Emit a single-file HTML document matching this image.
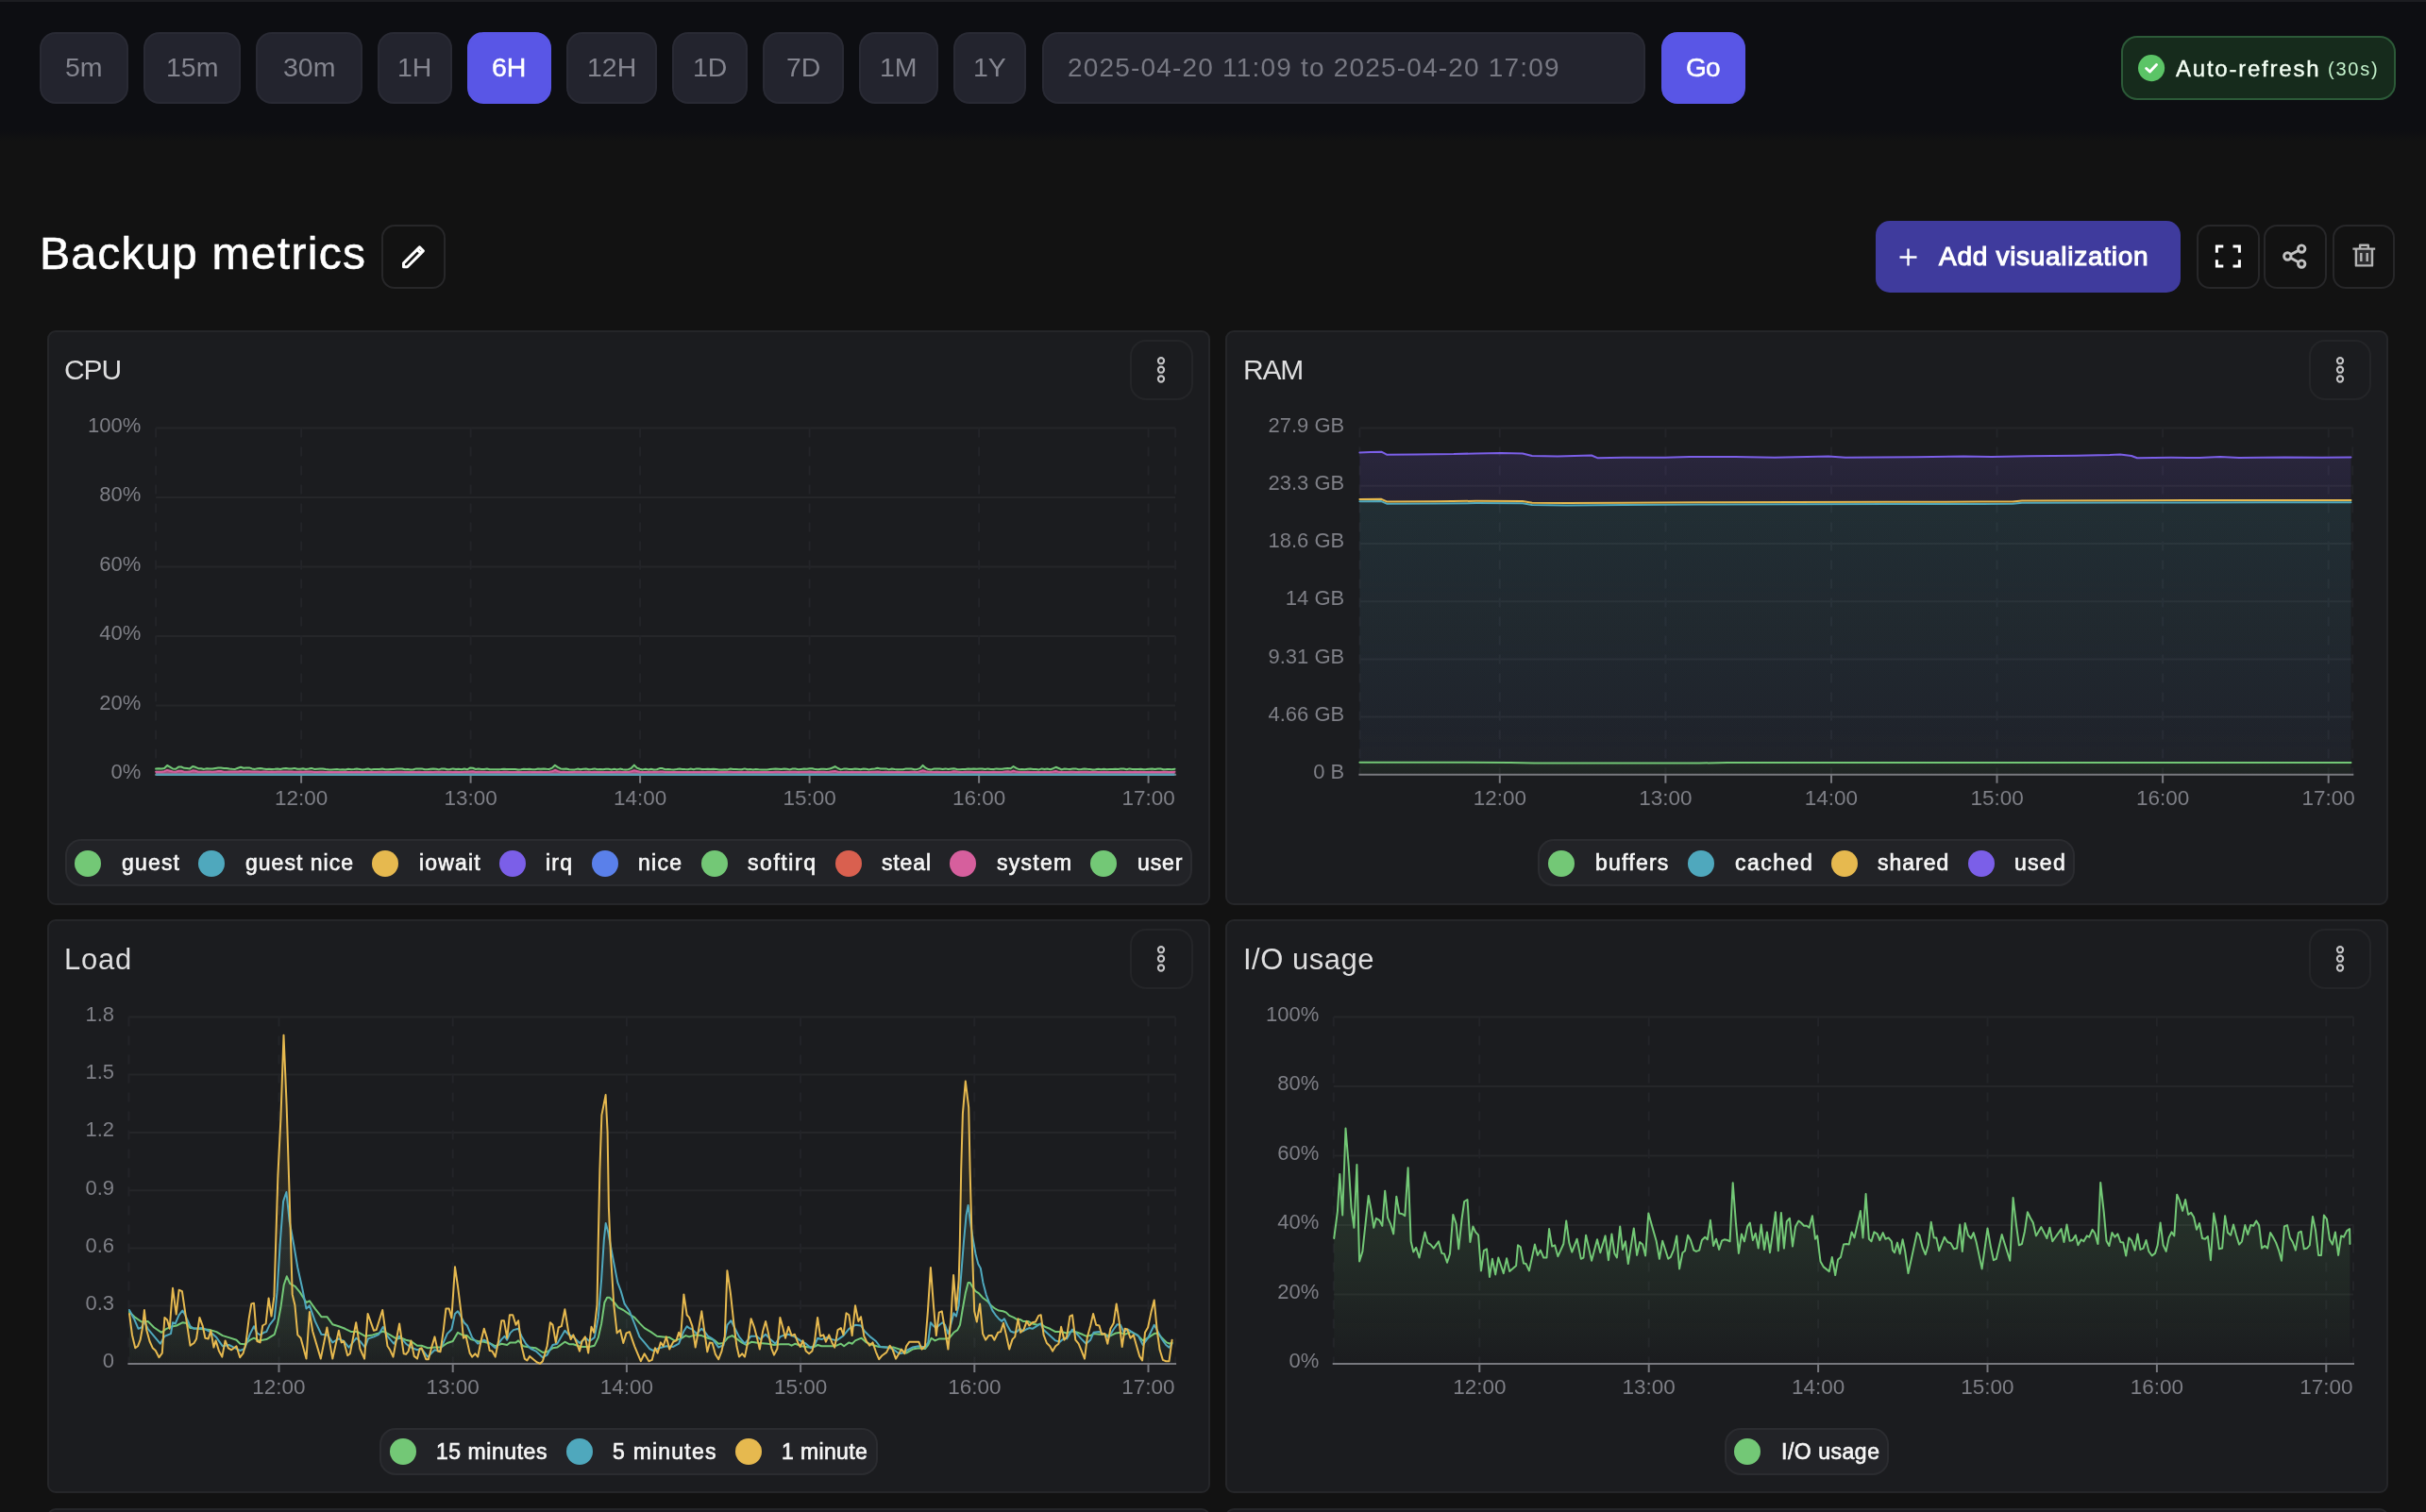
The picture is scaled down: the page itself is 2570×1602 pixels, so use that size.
<!DOCTYPE html>
<html lang="en"><head><meta charset="utf-8"><meta name="viewport" content="width=2570"><title>Backup metrics</title><style>
html,body{margin:0;padding:0;background:#121212;}
body{width:2570px;height:1602px;overflow:hidden;position:relative;font-family:'Liberation Sans', sans-serif;}
header,main,nav,section,div,button,ul,li,h1,h2{position:absolute;box-sizing:border-box;margin:0;padding:0;}
main,nav,li,.titlebar{left:0;top:0;width:0;height:0;}
button{font:inherit;color:inherit;background:none;border:none;text-align:left;overflow:visible;cursor:pointer;}
ul{list-style:none;}
h1,h2{font-weight:400;}
.t{position:absolute;white-space:pre;display:block;will-change:transform;}
.abs{position:absolute;}
.hdr{left:0;top:0;width:2570px;height:149px;border-top:2px solid #1c1d21;background:linear-gradient(#0d0e12 0,#0d0e12 136px,#121212 147px);}
.btn{background:#23242e;border:2px solid #292a34;border-radius:17px;}
.btn.act{background:#5956e6;border-color:#5956e6;}
.ar{background:#162b1c;border:2px solid #2c5a38;border-radius:17px;}
.ib{background:#121212;border:2px solid #272729;border-radius:14px;}
.addv{background:#3f3b9d;border-radius:15px;}
.panel{background:#1b1c1f;border:2px solid #252629;border-radius:9px;}
.kb{border:2px solid #242528;border-radius:17px;}
.lg{background:#222327;border:2px solid #2b2c30;border-radius:17px;}
.dot{position:absolute;width:28px;height:28px;border-radius:50%;display:block;}
svg{display:block;overflow:visible;}
.chart{position:absolute;will-change:transform;font-family:'Liberation Sans', sans-serif;}
</style></head><body><header class="hdr"><nav class="ranges" aria-label="Time range"><button type="button" class="btn" style="left:42px;top:32px;width:94px;height:75.7px;"><span class="t" style="left:25.2px;top:18.28px;font-size:28.5px;line-height:34px;color:#84858f;">5m</span></button><button type="button" class="btn" style="left:152px;top:32px;width:103px;height:75.7px;"><span class="t" style="left:21.77px;top:18.28px;font-size:28.5px;line-height:34px;color:#84858f;">15m</span></button><button type="button" class="btn" style="left:271px;top:32px;width:113px;height:75.7px;"><span class="t" style="left:26.77px;top:18.28px;font-size:28.5px;line-height:34px;color:#84858f;">30m</span></button><button type="button" class="btn" style="left:400px;top:32px;width:79px;height:75.7px;"><span class="t" style="left:19.28px;top:18.28px;font-size:28.5px;line-height:34px;color:#84858f;">1H</span></button><button type="button" class="btn act" style="left:495px;top:32px;width:89px;height:75.7px;"><span class="t" style="left:24.28px;top:18.28px;font-size:28.5px;line-height:34px;color:#ffffff;-webkit-text-stroke:0.45px #fff;">6H</span></button><button type="button" class="btn" style="left:600px;top:32px;width:96px;height:75.7px;"><span class="t" style="left:19.85px;top:18.28px;font-size:28.5px;line-height:34px;color:#84858f;">12H</span></button><button type="button" class="btn" style="left:712px;top:32px;width:79.5px;height:75.7px;"><span class="t" style="left:19.53px;top:18.28px;font-size:28.5px;line-height:34px;color:#84858f;">1D</span></button><button type="button" class="btn" style="left:808px;top:32px;width:85.5px;height:75.7px;"><span class="t" style="left:22.53px;top:18.28px;font-size:28.5px;line-height:34px;color:#84858f;">7D</span></button><button type="button" class="btn" style="left:910px;top:32px;width:84px;height:75.7px;"><span class="t" style="left:20.2px;top:18.28px;font-size:28.5px;line-height:34px;color:#84858f;">1M</span></button><button type="button" class="btn" style="left:1010px;top:32px;width:76.5px;height:75.7px;"><span class="t" style="left:18.81px;top:18.28px;font-size:28.5px;line-height:34px;color:#84858f;">1Y</span></button></nav><div class="btn field" style="left:1103.5px;top:32px;width:639px;height:75.7px;"><span class="t" style="left:25.2px;top:19.17px;font-size:28px;line-height:34px;color:#777882;letter-spacing:1.186px;">2025-04-20 11:09 to 2025-04-20 17:09</span></div><button type="button" class="btn act" style="left:1759.5px;top:32px;width:89.5px;height:75.7px;"><span class="t" style="left:24.5px;top:19.17px;font-size:28px;line-height:34px;color:#ffffff;letter-spacing:-0.859px;-webkit-text-stroke:0.5px #fff;">Go</span></button><div class="ar" style="left:2247.3px;top:36.1px;width:290.5px;height:67.6px;"><svg class="abs" style="left:15.4px;top:17.8px" width="28.2" height="28.2" viewBox="0 0 28 28"><circle cx="14" cy="14" r="14" fill="#5bc466"/><path d="M8.6 14.4L12.4 17.9L19.4 10.4" fill="none" stroke="#fff" stroke-width="2.9" stroke-linecap="round" stroke-linejoin="round"/></svg><span class="t" style="left:56.2px;top:17.68px;font-size:24px;line-height:29px;color:#f4fff4;letter-spacing:1.767px;-webkit-text-stroke:0.4px #f4fff4;">Auto-refresh</span><span class="t" style="left:216.7px;top:20.63px;font-size:20px;line-height:24px;color:#c4f2cc;letter-spacing:1.755px;">(30s)</span></div></header><main><div class="titlebar"><h1 class="t" style="left:41.5px;top:240.45px;font-size:48px;line-height:58px;color:#ffffff;letter-spacing:1.299px;-webkit-text-stroke:0.55px #fff;">Backup metrics</h1><button type="button" class="ib" aria-label="Edit" style="left:404px;top:238.4px;width:68px;height:67.3px;"><svg class="abs" style="left:19.8px;top:19.4px" width="24.3" height="24.3" viewBox="0 0 24 24"><path d="M1.5 22.5V18.6L18.2 1.9L22.1 5.8L5.4 22.5Z M15.8 4.3L19.7 8.2" fill="none" stroke="#fff" stroke-width="3" stroke-linejoin="round" stroke-linecap="round"/></svg></button><button type="button" class="addv" style="left:1987px;top:234px;width:323px;height:75.5px;"><svg class="abs" style="left:25px;top:28.5px" width="19" height="19" viewBox="0 0 19 19"><path d="M9.5 0.5V18.5M0.5 9.5H18.5" stroke="#fff" stroke-width="2.4" fill="none"/></svg><span class="t" style="left:67px;top:20.82px;font-size:28px;line-height:34px;color:#ffffff;letter-spacing:0.711px;-webkit-text-stroke:1.1px #fff;">Add visualization</span></button><button type="button" class="ib" aria-label="Fullscreen" style="left:2326.5px;top:238.4px;width:67.2px;height:67.3px;"><svg class="abs" style="left:0;top:0" width="63.2" height="63.3" viewBox="2328.5 240.4 63.2 63.3"><path d="M2347.9 268.2V261.3H2354.8M2365 261.3H2371.9V268.2M2371.9 275.6V282.5H2365M2354.8 282.5H2347.9V275.6" fill="none" stroke="#fff" stroke-width="3"/></svg></button><button type="button" class="ib" aria-label="Share" style="left:2398.4px;top:238.4px;width:66.8px;height:67.3px;"><svg class="abs" style="left:0;top:0" width="62.8" height="63.3" viewBox="2400.4 240.4 62.8 63.3"><g fill="none" stroke="#c2c2c2" stroke-width="2.9"><circle cx="2438.6" cy="264" r="3.7"/><circle cx="2438.6" cy="280" r="3.7"/><circle cx="2423.7" cy="271.9" r="3.7"/><path d="M2427 270.1L2435.3 265.8M2427 273.7L2435.3 278.2"/></g></svg></button><button type="button" class="ib" aria-label="Delete" style="left:2470.7px;top:238.4px;width:66.8px;height:67.3px;"><svg class="abs" style="left:0;top:0" width="62.8" height="63.3" viewBox="2472.7 240.4 62.8 63.3"><path d="M2495.6 265V281.8H2512.7V265Z" fill="#2c2c2e"/><path d="M2492.1 264H2515.9M2499.8 263.5V260.2H2508.5V263.5M2495.6 264.5V281.8H2512.7V264.5M2501 268.4V277.4M2507.4 268.4V277.4" fill="none" stroke="#b4b4b4" stroke-width="2.4" stroke-linejoin="round"/></svg></button></div><section class="panel" style="left:49.9px;top:349.8px;width:1232px;height:608.8px;"><h2 class="t" style="left:16.6px;top:22.65px;font-size:30px;line-height:36px;color:#dededf;letter-spacing:-1.072px;">CPU</h2><button type="button" class="kb" aria-label="Panel menu" style="left:1145.5px;top:8px;width:66.4px;height:64.3px;"><svg class="abs" style="left:25px;top:14.5px" width="12" height="32" viewBox="0 0 12 32"><g fill="none" stroke="#c4c4c6" stroke-width="2.1"><circle cx="6" cy="6.2" r="3.1"/><circle cx="6" cy="15.7" r="3.1"/><circle cx="6" cy="25.5" r="3.1"/></g></svg></button><svg class="chart" role="img" aria-label="CPU chart" style="left:0;top:0" width="1228" height="604.8" viewBox="51.9 351.8 1228 604.8"><defs></defs><path d="M165 453.4H1245M165 526.8H1245M165 600.3H1245M165 673.7H1245M165 747.2H1245" stroke="#252629" stroke-width="2" fill="none"/><path d="M165 453.4V820.6M319 453.4V820.6M498.5 453.4V820.6M678 453.4V820.6M857.5 453.4V820.6M1037 453.4V820.6M1216.5 453.4V820.6M1245 453.4V820.6" stroke="#232428" stroke-width="2" stroke-dasharray="10 10" fill="none"/><path d="M164 820.6H1246M319 820.6v9M498.5 820.6v9M678 820.6v9M857.5 820.6v9M1037 820.6v9M1216.5 820.6v9" stroke="#77787e" stroke-width="2" fill="none"/><path d="M165 814.4L168 814L171 814.2L174 813.8L177 810.8L180 812.4L183 814.3L186 814.6L189 812.4L192 812.3L195 813.6L198 813.8L201 814.2L204 811.8L207 812.6L210 814L213 814.1L216 814.7L219 814L222 814.4L225 814.3L228 813.7L231 813.4L234 813.4L237 813.9L240 813.7L243 814.3L246 814.6L249 814.7L252 813.5L255 812.6L257.9 813.6L260.9 813.3L263.9 813.2L266.9 814.2L269.9 814.7L272.9 814L275.9 813.8L278.9 814.3L281.9 814.7L284.9 814.6L287.9 814.7L290.9 814.6L293.9 814.3L296.9 814.7L299.9 814.1L302.9 813.8L305.9 814.4L308.9 814.4L311.9 813.7L314.9 814.6L317.9 814.5L320.9 814.1L323.9 814.7L326.9 814.3L329.9 813.7L332.9 814.7L335.9 814.5L338.9 814.3L341.9 814.3L344.9 814.8L347.9 815.1L350.9 815.2L353.9 815L356.9 814.9L359.9 815.2L362.9 815.1L365.9 815.2L368.9 814.6L371.9 815L374.9 814.8L377.9 814.3L380.9 814.7L383.9 815.2L386.9 814.9L389.9 814.3L392.9 815.2L395.9 814.7L398.9 814.7L401.9 814.7L404.9 814.3L407.9 815L410.9 815.1L413.9 814.7L416.9 814.9L419.9 814.4L422.9 814.3L425.9 814.3L428.9 815L431.9 814.9L434.9 815.2L437.8 815L440.8 814.2L443.8 814.2L446.8 814.2L449.8 815L452.8 815L455.8 814.6L458.8 814.3L461.8 814.5L464.8 815.2L467.8 814.2L470.8 814.4L473.8 815.1L476.8 814.9L479.8 814.2L482.8 814.8L485.8 814.5L488.8 815.1L491.8 814.3L494.8 815.1L497.8 813.4L500.8 813.6L503.8 814.8L506.8 814.2L509.8 814.7L512.8 814.8L515.8 814.3L518.8 815L521.8 815L524.8 815L527.8 815.1L530.8 814.9L533.8 814.6L536.8 814.8L539.8 814.7L542.8 814.7L545.8 814.8L548.8 815.2L551.8 815.1L554.8 814.5L557.8 814.9L560.8 814.6L563.8 815.1L566.8 815L569.8 814.4L572.8 814.6L575.8 814.2L578.8 814.6L581.8 814.7L584.8 813.4L587.8 810.5L590.8 812.7L593.8 814.2L596.8 814.6L599.8 814.3L602.8 815.1L605.8 815.2L608.8 815.2L611.8 814.4L614.8 815.1L617.7 814.5L620.7 814.3L623.7 815L626.7 814.8L629.7 814.2L632.7 815.1L635.7 814.7L638.7 815L641.7 814.5L644.7 814.6L647.7 815.2L650.7 814.6L653.7 815.2L656.7 814.4L659.7 815.1L662.7 815.2L665.7 815L668.7 813.6L671.7 810.4L674.7 813.4L677.7 814.6L680.7 815.2L683.7 814.5L686.7 815.2L689.7 814.6L692.7 815.2L695.7 815.1L698.7 813.9L701.7 813.9L704.7 815L707.7 814.7L710.7 815.1L713.7 815.2L716.7 814.9L719.7 814.4L722.7 814.7L725.7 814.9L728.7 815L731.7 814.4L734.7 815L737.7 814.2L740.7 814.3L743.7 814.7L746.7 814.8L749.7 814.5L752.7 814.9L755.7 814.5L758.7 814.8L761.7 815.2L764.7 815.2L767.7 815L770.7 815.2L773.7 814.3L776.7 814.9L779.7 814.9L782.7 815.1L785.7 815L788.7 814.2L791.7 815L794.7 814.9L797.6 815.2L800.6 814.7L803.6 815L806.6 815.2L809.6 815.2L812.6 815.2L815.6 814.9L818.6 814.6L821.6 814.4L824.6 814.5L827.6 814.8L830.6 814.2L833.6 814.5L836.6 815.2L839.6 814.3L842.6 814.4L845.6 815.1L848.6 814.7L851.6 814.4L854.6 814.6L857.6 814L860.6 814.1L863.6 814.9L866.6 815.1L869.6 814.6L872.6 814.6L875.6 814.7L878.6 814.4L881.6 813.3L884.6 811.9L887.6 813.8L890.6 815.2L893.6 814.4L896.6 814.4L899.6 814.7L902.6 814.7L905.6 814.4L908.6 814.5L911.6 815.1L914.6 814.4L917.6 814.6L920.6 815.2L923.6 814.5L926.6 814.2L929.6 813.6L932.6 814.2L935.6 814.3L938.6 814.2L941.6 815.2L944.6 814.3L947.6 814.8L950.6 815L953.6 815L956.6 815.1L959.6 814.2L962.6 814.3L965.6 814.3L968.6 815L971.6 814.7L974.5 813.9L977.5 810.7L980.5 813.5L983.5 814.9L986.5 815.2L989.5 814.3L992.5 814.2L995.5 814.3L998.5 814.8L1001.5 814.2L1004.5 814.9L1007.5 814.4L1010.5 814.1L1013.5 814.7L1016.5 815L1019.5 814.7L1022.5 814.8L1025.5 814.3L1028.5 814.6L1031.5 814.2L1034.5 814.5L1037.5 814.4L1040.5 814.4L1043.5 814.9L1046.5 814.2L1049.5 814.7L1052.5 814.9L1055.5 814.2L1058.5 814.5L1061.5 814.6L1064.5 814L1067.5 813.9L1070.5 814L1073.5 811.8L1076.5 813.7L1079.5 815L1082.5 814.9L1085.5 815L1088.5 814.6L1091.5 814.4L1094.5 814.8L1097.5 814.8L1100.5 815.2L1103.5 814.2L1106.5 814.7L1109.5 814.3L1112.5 815L1115.5 814L1118.5 812.6L1121.5 813.8L1124.5 815.2L1127.5 814.3L1130.5 814.6L1133.5 814.8L1136.5 814.3L1139.5 814.2L1142.5 815.1L1145.5 814.7L1148.5 814.2L1151.5 814.5L1154.5 814.7L1157.4 815.2L1160.4 815L1163.4 814.5L1166.4 815.1L1169.4 814.6L1172.4 815.1L1175.4 814.7L1178.4 814.8L1181.4 814.6L1184.4 814.9L1187.4 814.2L1190.4 814.3L1193.4 815L1196.4 814.2L1199.4 814.9L1202.4 814.7L1205.4 814.8L1208.4 814.5L1211.4 815L1214.4 814.9L1217.4 814.5L1220.4 814.4L1223.4 814.7L1226.4 814.2L1229.4 814.3L1232.4 815L1235.4 814.9L1238.4 814.7L1241.4 815L1244.4 814.5L1244.4 820.6L165 820.6Z" fill="rgba(115,200,118,0.14)" stroke="none"/><path d="M165 817.5L168 817.6L171 817.5L174 817L177 815.7L180 816.5L183 817.3L186 817.5L189 816.5L192 816.6L195 817.5L198 817.5L201 817.4L204 816.1L207 816.5L210 817.5L213 817.6L216 817.5L219 817.4L222 817.4L225 817.5L228 817.2L231 816.9L234 816.9L237 817.5L240 817.6L243 817.3L246 817.4L249 817.3L252 817.2L255 816.9L257.9 817.2L260.9 817.1L263.9 817L266.9 817.3L269.9 817.3L272.9 817.2L275.9 817.5L278.9 817.3L281.9 817.4L284.9 817.6L287.9 817.3L290.9 817.5L293.9 817.3L296.9 817.4L299.9 817.2L302.9 817.3L305.9 817.4L308.9 817.2L311.9 817.5L314.9 817.5L317.9 817.4L320.9 817.5L323.9 817.4L326.9 817.4L329.9 817.3L332.9 817.7L335.9 817.9L338.9 817.6L341.9 817.6L344.9 817.7L347.9 817.6L350.9 817.9L353.9 817.8L356.9 817.9L359.9 817.8L362.9 817.8L365.9 817.6L368.9 817.8L371.9 817.8L374.9 817.9L377.9 817.5L380.9 817.7L383.9 817.9L386.9 817.8L389.9 817.8L392.9 817.5L395.9 817.8L398.9 817.9L401.9 817.5L404.9 817.6L407.9 817.8L410.9 817.6L413.9 817.6L416.9 817.8L419.9 817.5L422.9 817.6L425.9 817.6L428.9 817.7L431.9 817.9L434.9 817.8L437.8 817.6L440.8 817.7L443.8 817.5L446.8 817.8L449.8 817.8L452.8 817.8L455.8 817.5L458.8 817.7L461.8 817.6L464.8 817.6L467.8 817.6L470.8 817.7L473.8 817.6L476.8 817.6L479.8 817.7L482.8 817.5L485.8 817.8L488.8 817.8L491.8 817.6L494.8 817.6L497.8 817.3L500.8 817.1L503.8 817.8L506.8 817.6L509.8 817.5L512.8 817.6L515.8 817.8L518.8 817.8L521.8 817.7L524.8 817.7L527.8 817.5L530.8 817.7L533.8 817.5L536.8 817.5L539.8 817.7L542.8 817.9L545.8 817.8L548.8 817.6L551.8 817.7L554.8 817.7L557.8 817.7L560.8 817.6L563.8 817.7L566.8 817.8L569.8 817.7L572.8 817.6L575.8 817.7L578.8 817.7L581.8 817.6L584.8 817.1L587.8 815.6L590.8 816.8L593.8 817.8L596.8 817.5L599.8 817.8L602.8 817.7L605.8 817.8L608.8 817.6L611.8 817.5L614.8 817.6L617.7 817.8L620.7 817.5L623.7 817.5L626.7 817.7L629.7 817.6L632.7 817.7L635.7 817.8L638.7 817.8L641.7 817.9L644.7 817.7L647.7 817.8L650.7 817.7L653.7 817.5L656.7 817.5L659.7 817.8L662.7 817.6L665.7 817.8L668.7 817L671.7 816L674.7 816.8L677.7 817.6L680.7 817.9L683.7 817.7L686.7 817.5L689.7 817.6L692.7 817.6L695.7 817.5L698.7 817.4L701.7 817.2L704.7 817.8L707.7 817.8L710.7 817.8L713.7 817.8L716.7 817.8L719.7 817.8L722.7 817.8L725.7 817.9L728.7 817.9L731.7 817.7L734.7 817.7L737.7 817.9L740.7 817.7L743.7 817.6L746.7 817.7L749.7 817.5L752.7 817.6L755.7 817.6L758.7 817.8L761.7 817.8L764.7 817.6L767.7 817.8L770.7 817.6L773.7 817.6L776.7 817.8L779.7 817.7L782.7 817.7L785.7 817.5L788.7 817.7L791.7 817.5L794.7 817.8L797.6 817.7L800.6 817.7L803.6 817.7L806.6 817.8L809.6 817.7L812.6 817.9L815.6 817.8L818.6 817.7L821.6 817.6L824.6 817.5L827.6 817.8L830.6 817.8L833.6 817.6L836.6 817.6L839.6 817.6L842.6 817.6L845.6 817.7L848.6 817.6L851.6 817.6L854.6 817.5L857.6 817.4L860.6 817.5L863.6 817.7L866.6 817.6L869.6 817.6L872.6 817.6L875.6 817.9L878.6 817.6L881.6 817L884.6 816.7L887.6 817.5L890.6 817.8L893.6 817.8L896.6 817.5L899.6 817.7L902.6 817.6L905.6 817.7L908.6 817.9L911.6 817.8L914.6 817.8L917.6 817.9L920.6 817.8L923.6 817.6L926.6 817.6L929.6 817.2L932.6 817.6L935.6 817.8L938.6 817.5L941.6 817.7L944.6 817.5L947.6 817.8L950.6 817.5L953.6 817.7L956.6 817.7L959.6 817.8L962.6 817.7L965.6 817.6L968.6 817.5L971.6 817.9L974.5 817.1L977.5 816L980.5 817L983.5 817.6L986.5 817.6L989.5 817.9L992.5 817.6L995.5 817.8L998.5 817.7L1001.5 817.7L1004.5 817.7L1007.5 817.6L1010.5 817.1L1013.5 817.4L1016.5 817.8L1019.5 817.8L1022.5 817.5L1025.5 817.6L1028.5 817.5L1031.5 817.7L1034.5 817.9L1037.5 817.7L1040.5 817.6L1043.5 817.9L1046.5 817.8L1049.5 817.8L1052.5 817.6L1055.5 817.8L1058.5 817.8L1061.5 817.7L1064.5 817.4L1067.5 817.1L1070.5 817.5L1073.5 816.4L1076.5 817.4L1079.5 817.9L1082.5 817.9L1085.5 817.8L1088.5 817.5L1091.5 817.7L1094.5 817.7L1097.5 817.8L1100.5 817.8L1103.5 817.8L1106.5 817.6L1109.5 817.8L1112.5 817.8L1115.5 817.4L1118.5 816.8L1121.5 817.7L1124.5 817.6L1127.5 817.7L1130.5 817.9L1133.5 817.5L1136.5 817.6L1139.5 817.8L1142.5 817.8L1145.5 817.6L1148.5 817.6L1151.5 817.6L1154.5 817.7L1157.4 817.6L1160.4 817.5L1163.4 817.8L1166.4 817.8L1169.4 817.6L1172.4 817.9L1175.4 817.7L1178.4 817.8L1181.4 817.9L1184.4 817.7L1187.4 817.6L1190.4 817.7L1193.4 817.8L1196.4 817.6L1199.4 817.9L1202.4 817.6L1205.4 817.8L1208.4 817.5L1211.4 817.9L1214.4 817.7L1217.4 817.8L1220.4 817.6L1223.4 817.8L1226.4 817.8L1229.4 817.8L1232.4 817.6L1235.4 817.5L1238.4 817.8L1241.4 817.7L1244.4 817.5L1244.4 820.6L165 820.6Z" fill="rgba(214,95,157,0.75)" stroke="none"/><path d="M165 817.5L168 817.6L171 817.5L174 817L177 815.7L180 816.5L183 817.3L186 817.5L189 816.5L192 816.6L195 817.5L198 817.5L201 817.4L204 816.1L207 816.5L210 817.5L213 817.6L216 817.5L219 817.4L222 817.4L225 817.5L228 817.2L231 816.9L234 816.9L237 817.5L240 817.6L243 817.3L246 817.4L249 817.3L252 817.2L255 816.9L257.9 817.2L260.9 817.1L263.9 817L266.9 817.3L269.9 817.3L272.9 817.2L275.9 817.5L278.9 817.3L281.9 817.4L284.9 817.6L287.9 817.3L290.9 817.5L293.9 817.3L296.9 817.4L299.9 817.2L302.9 817.3L305.9 817.4L308.9 817.2L311.9 817.5L314.9 817.5L317.9 817.4L320.9 817.5L323.9 817.4L326.9 817.4L329.9 817.3L332.9 817.7L335.9 817.9L338.9 817.6L341.9 817.6L344.9 817.7L347.9 817.6L350.9 817.9L353.9 817.8L356.9 817.9L359.9 817.8L362.9 817.8L365.9 817.6L368.9 817.8L371.9 817.8L374.9 817.9L377.9 817.5L380.9 817.7L383.9 817.9L386.9 817.8L389.9 817.8L392.9 817.5L395.9 817.8L398.9 817.9L401.9 817.5L404.9 817.6L407.9 817.8L410.9 817.6L413.9 817.6L416.9 817.8L419.9 817.5L422.9 817.6L425.9 817.6L428.9 817.7L431.9 817.9L434.9 817.8L437.8 817.6L440.8 817.7L443.8 817.5L446.8 817.8L449.8 817.8L452.8 817.8L455.8 817.5L458.8 817.7L461.8 817.6L464.8 817.6L467.8 817.6L470.8 817.7L473.8 817.6L476.8 817.6L479.8 817.7L482.8 817.5L485.8 817.8L488.8 817.8L491.8 817.6L494.8 817.6L497.8 817.3L500.8 817.1L503.8 817.8L506.8 817.6L509.8 817.5L512.8 817.6L515.8 817.8L518.8 817.8L521.8 817.7L524.8 817.7L527.8 817.5L530.8 817.7L533.8 817.5L536.8 817.5L539.8 817.7L542.8 817.9L545.8 817.8L548.8 817.6L551.8 817.7L554.8 817.7L557.8 817.7L560.8 817.6L563.8 817.7L566.8 817.8L569.8 817.7L572.8 817.6L575.8 817.7L578.8 817.7L581.8 817.6L584.8 817.1L587.8 815.6L590.8 816.8L593.8 817.8L596.8 817.5L599.8 817.8L602.8 817.7L605.8 817.8L608.8 817.6L611.8 817.5L614.8 817.6L617.7 817.8L620.7 817.5L623.7 817.5L626.7 817.7L629.7 817.6L632.7 817.7L635.7 817.8L638.7 817.8L641.7 817.9L644.7 817.7L647.7 817.8L650.7 817.7L653.7 817.5L656.7 817.5L659.7 817.8L662.7 817.6L665.7 817.8L668.7 817L671.7 816L674.7 816.8L677.7 817.6L680.7 817.9L683.7 817.7L686.7 817.5L689.7 817.6L692.7 817.6L695.7 817.5L698.7 817.4L701.7 817.2L704.7 817.8L707.7 817.8L710.7 817.8L713.7 817.8L716.7 817.8L719.7 817.8L722.7 817.8L725.7 817.9L728.7 817.9L731.7 817.7L734.7 817.7L737.7 817.9L740.7 817.7L743.7 817.6L746.7 817.7L749.7 817.5L752.7 817.6L755.7 817.6L758.7 817.8L761.7 817.8L764.7 817.6L767.7 817.8L770.7 817.6L773.7 817.6L776.7 817.8L779.7 817.7L782.7 817.7L785.7 817.5L788.7 817.7L791.7 817.5L794.7 817.8L797.6 817.7L800.6 817.7L803.6 817.7L806.6 817.8L809.6 817.7L812.6 817.9L815.6 817.8L818.6 817.7L821.6 817.6L824.6 817.5L827.6 817.8L830.6 817.8L833.6 817.6L836.6 817.6L839.6 817.6L842.6 817.6L845.6 817.7L848.6 817.6L851.6 817.6L854.6 817.5L857.6 817.4L860.6 817.5L863.6 817.7L866.6 817.6L869.6 817.6L872.6 817.6L875.6 817.9L878.6 817.6L881.6 817L884.6 816.7L887.6 817.5L890.6 817.8L893.6 817.8L896.6 817.5L899.6 817.7L902.6 817.6L905.6 817.7L908.6 817.9L911.6 817.8L914.6 817.8L917.6 817.9L920.6 817.8L923.6 817.6L926.6 817.6L929.6 817.2L932.6 817.6L935.6 817.8L938.6 817.5L941.6 817.7L944.6 817.5L947.6 817.8L950.6 817.5L953.6 817.7L956.6 817.7L959.6 817.8L962.6 817.7L965.6 817.6L968.6 817.5L971.6 817.9L974.5 817.1L977.5 816L980.5 817L983.5 817.6L986.5 817.6L989.5 817.9L992.5 817.6L995.5 817.8L998.5 817.7L1001.5 817.7L1004.5 817.7L1007.5 817.6L1010.5 817.1L1013.5 817.4L1016.5 817.8L1019.5 817.8L1022.5 817.5L1025.5 817.6L1028.5 817.5L1031.5 817.7L1034.5 817.9L1037.5 817.7L1040.5 817.6L1043.5 817.9L1046.5 817.8L1049.5 817.8L1052.5 817.6L1055.5 817.8L1058.5 817.8L1061.5 817.7L1064.5 817.4L1067.5 817.1L1070.5 817.5L1073.5 816.4L1076.5 817.4L1079.5 817.9L1082.5 817.9L1085.5 817.8L1088.5 817.5L1091.5 817.7L1094.5 817.7L1097.5 817.8L1100.5 817.8L1103.5 817.8L1106.5 817.6L1109.5 817.8L1112.5 817.8L1115.5 817.4L1118.5 816.8L1121.5 817.7L1124.5 817.6L1127.5 817.7L1130.5 817.9L1133.5 817.5L1136.5 817.6L1139.5 817.8L1142.5 817.8L1145.5 817.6L1148.5 817.6L1151.5 817.6L1154.5 817.7L1157.4 817.6L1160.4 817.5L1163.4 817.8L1166.4 817.8L1169.4 817.6L1172.4 817.9L1175.4 817.7L1178.4 817.8L1181.4 817.9L1184.4 817.7L1187.4 817.6L1190.4 817.7L1193.4 817.8L1196.4 817.6L1199.4 817.9L1202.4 817.6L1205.4 817.8L1208.4 817.5L1211.4 817.9L1214.4 817.7L1217.4 817.8L1220.4 817.6L1223.4 817.8L1226.4 817.8L1229.4 817.8L1232.4 817.6L1235.4 817.5L1238.4 817.8L1241.4 817.7L1244.4 817.5" fill="none" stroke="#d65f9d" stroke-width="2" stroke-linejoin="round" stroke-linecap="round"/><path d="M165 814.4L168 814L171 814.2L174 813.8L177 810.8L180 812.4L183 814.3L186 814.6L189 812.4L192 812.3L195 813.6L198 813.8L201 814.2L204 811.8L207 812.6L210 814L213 814.1L216 814.7L219 814L222 814.4L225 814.3L228 813.7L231 813.4L234 813.4L237 813.9L240 813.7L243 814.3L246 814.6L249 814.7L252 813.5L255 812.6L257.9 813.6L260.9 813.3L263.9 813.2L266.9 814.2L269.9 814.7L272.9 814L275.9 813.8L278.9 814.3L281.9 814.7L284.9 814.6L287.9 814.7L290.9 814.6L293.9 814.3L296.9 814.7L299.9 814.1L302.9 813.8L305.9 814.4L308.9 814.4L311.9 813.7L314.9 814.6L317.9 814.5L320.9 814.1L323.9 814.7L326.9 814.3L329.9 813.7L332.9 814.7L335.9 814.5L338.9 814.3L341.9 814.3L344.9 814.8L347.9 815.1L350.9 815.2L353.9 815L356.9 814.9L359.9 815.2L362.9 815.1L365.9 815.2L368.9 814.6L371.9 815L374.9 814.8L377.9 814.3L380.9 814.7L383.9 815.2L386.9 814.9L389.9 814.3L392.9 815.2L395.9 814.7L398.9 814.7L401.9 814.7L404.9 814.3L407.9 815L410.9 815.1L413.9 814.7L416.9 814.9L419.9 814.4L422.9 814.3L425.9 814.3L428.9 815L431.9 814.9L434.9 815.2L437.8 815L440.8 814.2L443.8 814.2L446.8 814.2L449.8 815L452.8 815L455.8 814.6L458.8 814.3L461.8 814.5L464.8 815.2L467.8 814.2L470.8 814.4L473.8 815.1L476.8 814.9L479.8 814.2L482.8 814.8L485.8 814.5L488.8 815.1L491.8 814.3L494.8 815.1L497.8 813.4L500.8 813.6L503.8 814.8L506.8 814.2L509.8 814.7L512.8 814.8L515.8 814.3L518.8 815L521.8 815L524.8 815L527.8 815.1L530.8 814.9L533.8 814.6L536.8 814.8L539.8 814.7L542.8 814.7L545.8 814.8L548.8 815.2L551.8 815.1L554.8 814.5L557.8 814.9L560.8 814.6L563.8 815.1L566.8 815L569.8 814.4L572.8 814.6L575.8 814.2L578.8 814.6L581.8 814.7L584.8 813.4L587.8 810.5L590.8 812.7L593.8 814.2L596.8 814.6L599.8 814.3L602.8 815.1L605.8 815.2L608.8 815.2L611.8 814.4L614.8 815.1L617.7 814.5L620.7 814.3L623.7 815L626.7 814.8L629.7 814.2L632.7 815.1L635.7 814.7L638.7 815L641.7 814.5L644.7 814.6L647.7 815.2L650.7 814.6L653.7 815.2L656.7 814.4L659.7 815.1L662.7 815.2L665.7 815L668.7 813.6L671.7 810.4L674.7 813.4L677.7 814.6L680.7 815.2L683.7 814.5L686.7 815.2L689.7 814.6L692.7 815.2L695.7 815.1L698.7 813.9L701.7 813.9L704.7 815L707.7 814.7L710.7 815.1L713.7 815.2L716.7 814.9L719.7 814.4L722.7 814.7L725.7 814.9L728.7 815L731.7 814.4L734.7 815L737.7 814.2L740.7 814.3L743.7 814.7L746.7 814.8L749.7 814.5L752.7 814.9L755.7 814.5L758.7 814.8L761.7 815.2L764.7 815.2L767.7 815L770.7 815.2L773.7 814.3L776.7 814.9L779.7 814.9L782.7 815.1L785.7 815L788.7 814.2L791.7 815L794.7 814.9L797.6 815.2L800.6 814.7L803.6 815L806.6 815.2L809.6 815.2L812.6 815.2L815.6 814.9L818.6 814.6L821.6 814.4L824.6 814.5L827.6 814.8L830.6 814.2L833.6 814.5L836.6 815.2L839.6 814.3L842.6 814.4L845.6 815.1L848.6 814.7L851.6 814.4L854.6 814.6L857.6 814L860.6 814.1L863.6 814.9L866.6 815.1L869.6 814.6L872.6 814.6L875.6 814.7L878.6 814.4L881.6 813.3L884.6 811.9L887.6 813.8L890.6 815.2L893.6 814.4L896.6 814.4L899.6 814.7L902.6 814.7L905.6 814.4L908.6 814.5L911.6 815.1L914.6 814.4L917.6 814.6L920.6 815.2L923.6 814.5L926.6 814.2L929.6 813.6L932.6 814.2L935.6 814.3L938.6 814.2L941.6 815.2L944.6 814.3L947.6 814.8L950.6 815L953.6 815L956.6 815.1L959.6 814.2L962.6 814.3L965.6 814.3L968.6 815L971.6 814.7L974.5 813.9L977.5 810.7L980.5 813.5L983.5 814.9L986.5 815.2L989.5 814.3L992.5 814.2L995.5 814.3L998.5 814.8L1001.5 814.2L1004.5 814.9L1007.5 814.4L1010.5 814.1L1013.5 814.7L1016.5 815L1019.5 814.7L1022.5 814.8L1025.5 814.3L1028.5 814.6L1031.5 814.2L1034.5 814.5L1037.5 814.4L1040.5 814.4L1043.5 814.9L1046.5 814.2L1049.5 814.7L1052.5 814.9L1055.5 814.2L1058.5 814.5L1061.5 814.6L1064.5 814L1067.5 813.9L1070.5 814L1073.5 811.8L1076.5 813.7L1079.5 815L1082.5 814.9L1085.5 815L1088.5 814.6L1091.5 814.4L1094.5 814.8L1097.5 814.8L1100.5 815.2L1103.5 814.2L1106.5 814.7L1109.5 814.3L1112.5 815L1115.5 814L1118.5 812.6L1121.5 813.8L1124.5 815.2L1127.5 814.3L1130.5 814.6L1133.5 814.8L1136.5 814.3L1139.5 814.2L1142.5 815.1L1145.5 814.7L1148.5 814.2L1151.5 814.5L1154.5 814.7L1157.4 815.2L1160.4 815L1163.4 814.5L1166.4 815.1L1169.4 814.6L1172.4 815.1L1175.4 814.7L1178.4 814.8L1181.4 814.6L1184.4 814.9L1187.4 814.2L1190.4 814.3L1193.4 815L1196.4 814.2L1199.4 814.9L1202.4 814.7L1205.4 814.8L1208.4 814.5L1211.4 815L1214.4 814.9L1217.4 814.5L1220.4 814.4L1223.4 814.7L1226.4 814.2L1229.4 814.3L1232.4 815L1235.4 814.9L1238.4 814.7L1241.4 815L1244.4 814.5" fill="none" stroke="#73c876" stroke-width="2" stroke-linejoin="round" stroke-linecap="round"/><path d="M165 820.6H1244.4" stroke="#5b9fb2" stroke-width="2.4" fill="none"/><g class="axl"><text x="149.2" y="457.38" font-size="22" fill="#7e7f86" text-anchor="end">100%</text><text x="149.2" y="530.88" font-size="22" fill="#7e7f86" text-anchor="end">80%</text><text x="149.2" y="604.38" font-size="22" fill="#7e7f86" text-anchor="end">60%</text><text x="149.2" y="677.88" font-size="22" fill="#7e7f86" text-anchor="end">40%</text><text x="149.2" y="751.38" font-size="22" fill="#7e7f86" text-anchor="end">20%</text><text x="149.2" y="824.88" font-size="22" fill="#7e7f86" text-anchor="end">0%</text><text x="319" y="852.85" font-size="22.5" fill="#7e7f86" text-anchor="middle">12:00</text><text x="498.5" y="852.85" font-size="22.5" fill="#7e7f86" text-anchor="middle">13:00</text><text x="678" y="852.85" font-size="22.5" fill="#7e7f86" text-anchor="middle">14:00</text><text x="857.5" y="852.85" font-size="22.5" fill="#7e7f86" text-anchor="middle">15:00</text><text x="1037" y="852.85" font-size="22.5" fill="#7e7f86" text-anchor="middle">16:00</text><text x="1216.5" y="852.85" font-size="22.5" fill="#7e7f86" text-anchor="middle">17:00</text></g></svg><ul class="lg" style="left:17.1px;top:537.6px;width:1194px;height:50.1px;"><li><i class="dot" style="left:8.3px;top:9.25px;background:#73c876"></i><span class="t" style="left:58px;top:8.71px;font-size:23px;line-height:28px;color:#f6f6f6;letter-spacing:1.184px;-webkit-text-stroke:0.65px #f6f6f6;">guest</span></li><li><i class="dot" style="left:139px;top:9.25px;background:#4fa8bd"></i><span class="t" style="left:188.8px;top:8.71px;font-size:23px;line-height:28px;color:#f6f6f6;letter-spacing:1.016px;-webkit-text-stroke:0.65px #f6f6f6;">guest nice</span></li><li><i class="dot" style="left:322.8px;top:9.25px;background:#e6b94f"></i><span class="t" style="left:372.7px;top:8.71px;font-size:23px;line-height:28px;color:#f6f6f6;letter-spacing:1.157px;-webkit-text-stroke:0.65px #f6f6f6;">iowait</span></li><li><i class="dot" style="left:457.6px;top:9.25px;background:#7b5fe8"></i><span class="t" style="left:507px;top:8.71px;font-size:23px;line-height:28px;color:#f6f6f6;letter-spacing:1.219px;-webkit-text-stroke:0.65px #f6f6f6;">irq</span></li><li><i class="dot" style="left:555.8px;top:9.25px;background:#5a80ea"></i><span class="t" style="left:605.4px;top:8.71px;font-size:23px;line-height:28px;color:#f6f6f6;letter-spacing:1.299px;-webkit-text-stroke:0.65px #f6f6f6;">nice</span></li><li><i class="dot" style="left:671.8px;top:9.25px;background:#73c876"></i><span class="t" style="left:721.5px;top:8.71px;font-size:23px;line-height:28px;color:#f6f6f6;letter-spacing:1.560px;-webkit-text-stroke:0.65px #f6f6f6;">softirq</span></li><li><i class="dot" style="left:813.8px;top:9.25px;background:#d9604f"></i><span class="t" style="left:863.4px;top:8.71px;font-size:23px;line-height:28px;color:#f6f6f6;letter-spacing:0.852px;-webkit-text-stroke:0.65px #f6f6f6;">steal</span></li><li><i class="dot" style="left:935.4px;top:9.25px;background:#d65f9d"></i><span class="t" style="left:984.8px;top:8.71px;font-size:23px;line-height:28px;color:#f6f6f6;letter-spacing:1.271px;-webkit-text-stroke:0.65px #f6f6f6;">system</span></li><li><i class="dot" style="left:1084.2px;top:9.25px;background:#73c876"></i><span class="t" style="left:1133.9px;top:8.71px;font-size:23px;line-height:28px;color:#f6f6f6;letter-spacing:0.883px;-webkit-text-stroke:0.65px #f6f6f6;">user</span></li></ul></section><section class="panel" style="left:1298px;top:349.8px;width:1232px;height:608.8px;"><h2 class="t" style="left:16.6px;top:22.65px;font-size:30px;line-height:36px;color:#dededf;letter-spacing:-1.186px;">RAM</h2><button type="button" class="kb" aria-label="Panel menu" style="left:1145.5px;top:8px;width:66.4px;height:64.3px;"><svg class="abs" style="left:25px;top:14.5px" width="12" height="32" viewBox="0 0 12 32"><g fill="none" stroke="#c4c4c6" stroke-width="2.1"><circle cx="6" cy="6.2" r="3.1"/><circle cx="6" cy="15.7" r="3.1"/><circle cx="6" cy="25.5" r="3.1"/></g></svg></button><svg class="chart" role="img" aria-label="RAM chart" style="left:0;top:0" width="1228" height="604.8" viewBox="1300 351.8 1228 604.8"><defs><linearGradient id="rp" gradientUnits="userSpaceOnUse" x1="0" y1="478" x2="0" y2="532"><stop offset="0" stop-color="#7b5fe8" stop-opacity="0.15"/><stop offset="1" stop-color="#7b5fe8" stop-opacity="0.105"/></linearGradient><linearGradient id="rt" gradientUnits="userSpaceOnUse" x1="0" y1="531" x2="0" y2="808"><stop offset="0" stop-color="#4fa8bd" stop-opacity="0.135"/><stop offset="1" stop-color="#4fa8bd" stop-opacity="0.035"/></linearGradient><linearGradient id="rg" gradientUnits="userSpaceOnUse" x1="0" y1="807" x2="0" y2="821"><stop offset="0" stop-color="#73c876" stop-opacity="0.1"/><stop offset="1" stop-color="#73c876" stop-opacity="0.04"/></linearGradient><linearGradient id="rpp" gradientUnits="userSpaceOnUse" x1="0" y1="531" x2="0" y2="821"><stop offset="0" stop-color="#7b5fe8" stop-opacity="0.0"/><stop offset="1" stop-color="#7b5fe8" stop-opacity="0.035"/></linearGradient></defs><path d="M1440.4 453.4H2492.3M1440.4 514.6H2492.3M1440.4 575.8H2492.3M1440.4 637H2492.3M1440.4 698.2H2492.3M1440.4 759.4H2492.3" stroke="#252629" stroke-width="2" fill="none"/><path d="M1440.4 453.4V820.6M1588.8 453.4V820.6M1764.4 453.4V820.6M1940 453.4V820.6M2115.5 453.4V820.6M2291.1 453.4V820.6M2466.7 453.4V820.6M2492.3 453.4V820.6" stroke="#232428" stroke-width="2" stroke-dasharray="10 10" fill="none"/><path d="M1440.4 479.3L1452 478.9L1463.4 478.5L1469 481.5L1500 481.2L1540 480.9L1563.6 480.2L1590 479.9L1613 480.3L1623 482.8L1650 483.2L1686 482.3L1692.2 485L1720 484.6L1764 484.5L1790 483.9L1838 483.7L1880 484.6L1937 483.3L1955 484.6L2030 484L2080 483.2L2110 483.9L2150 483L2200 482.6L2235 481.8L2246 481.3L2258 482.8L2264 485L2300 484.6L2330 484.9L2352 483.8L2372 484.8L2420 484.2L2460 484.6L2490.5 484.4L2490.5 529.7L2400 529.8L2250 530L2142 530.2L2132 531.3L2100 531.4L2000 531.6L1900 531.8L1800 532.1L1720 532.5L1660 532.9L1623 532.5L1613 530.7L1563.6 530.6L1520 531L1469 531.2L1463.4 528.6L1440.4 528.8Z" fill="url(#rp)"/><path d="M1440.4 531.1L1463.4 530.9L1469 533.5L1520 533.3L1563.6 532.9L1613 533L1623 534.8L1660 535.2L1720 534.8L1800 534.4L1900 534.1L2000 533.9L2100 533.7L2132 533.6L2142 532.5L2250 532.3L2400 532.1L2490.5 532L2490.5 807.7L1830 807.9L1800 808.3L1625 808.4L1600 807.7L1440.4 807.6Z" fill="url(#rt)"/><path d="M1440.4 531.1L1463.4 530.9L1469 533.5L1520 533.3L1563.6 532.9L1613 533L1623 534.8L1660 535.2L1720 534.8L1800 534.4L1900 534.1L2000 533.9L2100 533.7L2132 533.6L2142 532.5L2250 532.3L2400 532.1L2490.5 532L2490.5 807.7L1830 807.9L1800 808.3L1625 808.4L1600 807.7L1440.4 807.6Z" fill="url(#rpp)"/><path d="M1440.4 807.6L1600 807.7L1625 808.4L1800 808.3L1830 807.9L2490.5 807.7L2490.5 820.6L1440.4 820.6Z" fill="url(#rg)" stroke="none"/><path d="M1439.4 820.6H2493.3M1588.8 820.6v9M1764.4 820.6v9M1940 820.6v9M2115.5 820.6v9M2291.1 820.6v9M2466.7 820.6v9" stroke="#77787e" stroke-width="2" fill="none"/><path d="M1440.4 807.6L1600 807.7L1625 808.4L1800 808.3L1830 807.9L2490.5 807.7" fill="none" stroke="#73c876" stroke-width="2" stroke-linejoin="round" stroke-linecap="round"/><path d="M1440.4 531.1L1463.4 530.9L1469 533.5L1520 533.3L1563.6 532.9L1613 533L1623 534.8L1660 535.2L1720 534.8L1800 534.4L1900 534.1L2000 533.9L2100 533.7L2132 533.6L2142 532.5L2250 532.3L2400 532.1L2490.5 532" fill="none" stroke="#4fa8bd" stroke-width="2" stroke-linejoin="round" stroke-linecap="round"/><path d="M1440.4 528.8L1463.4 528.6L1469 531.2L1520 531L1563.6 530.6L1613 530.7L1623 532.5L1660 532.9L1720 532.5L1800 532.1L1900 531.8L2000 531.6L2100 531.4L2132 531.3L2142 530.2L2250 530L2400 529.8L2490.5 529.7" fill="none" stroke="#e6b94f" stroke-width="2" stroke-linejoin="round" stroke-linecap="round"/><path d="M1440.4 479.3L1452 478.9L1463.4 478.5L1469 481.5L1500 481.2L1540 480.9L1563.6 480.2L1590 479.9L1613 480.3L1623 482.8L1650 483.2L1686 482.3L1692.2 485L1720 484.6L1764 484.5L1790 483.9L1838 483.7L1880 484.6L1937 483.3L1955 484.6L2030 484L2080 483.2L2110 483.9L2150 483L2200 482.6L2235 481.8L2246 481.3L2258 482.8L2264 485L2300 484.6L2330 484.9L2352 483.8L2372 484.8L2420 484.2L2460 484.6L2490.5 484.4" fill="none" stroke="#7b5fe8" stroke-width="2" stroke-linejoin="round" stroke-linecap="round"/><g class="axl"><text x="1424.2" y="457.38" font-size="22" fill="#7e7f86" text-anchor="end">27.9 GB</text><text x="1424.2" y="518.63" font-size="22" fill="#7e7f86" text-anchor="end">23.3 GB</text><text x="1424.2" y="579.88" font-size="22" fill="#7e7f86" text-anchor="end">18.6 GB</text><text x="1424.2" y="641.13" font-size="22" fill="#7e7f86" text-anchor="end">14 GB</text><text x="1424.2" y="702.38" font-size="22" fill="#7e7f86" text-anchor="end">9.31 GB</text><text x="1424.2" y="763.63" font-size="22" fill="#7e7f86" text-anchor="end">4.66 GB</text><text x="1424.2" y="824.88" font-size="22" fill="#7e7f86" text-anchor="end">0 B</text><text x="1588.8" y="852.85" font-size="22.5" fill="#7e7f86" text-anchor="middle">12:00</text><text x="1764.38" y="852.85" font-size="22.5" fill="#7e7f86" text-anchor="middle">13:00</text><text x="1939.96" y="852.85" font-size="22.5" fill="#7e7f86" text-anchor="middle">14:00</text><text x="2115.54" y="852.85" font-size="22.5" fill="#7e7f86" text-anchor="middle">15:00</text><text x="2291.12" y="852.85" font-size="22.5" fill="#7e7f86" text-anchor="middle">16:00</text><text x="2466.7" y="852.85" font-size="22.5" fill="#7e7f86" text-anchor="middle">17:00</text></g></svg><ul class="lg" style="left:329px;top:537.6px;width:569px;height:50.1px;"><li><i class="dot" style="left:8.6px;top:9.25px;background:#73c876"></i><span class="t" style="left:58.7px;top:8.71px;font-size:23px;line-height:28px;color:#f6f6f6;letter-spacing:1.232px;-webkit-text-stroke:0.65px #f6f6f6;">buffers</span></li><li><i class="dot" style="left:156.9px;top:9.25px;background:#4fa8bd"></i><span class="t" style="left:206.5px;top:8.71px;font-size:23px;line-height:28px;color:#f6f6f6;letter-spacing:1.526px;-webkit-text-stroke:0.65px #f6f6f6;">cached</span></li><li><i class="dot" style="left:309px;top:9.25px;background:#e6b94f"></i><span class="t" style="left:357.7px;top:8.71px;font-size:23px;line-height:28px;color:#f6f6f6;letter-spacing:0.994px;-webkit-text-stroke:0.65px #f6f6f6;">shared</span></li><li><i class="dot" style="left:453.8px;top:9.25px;background:#7b5fe8"></i><span class="t" style="left:503px;top:8.71px;font-size:23px;line-height:28px;color:#f6f6f6;letter-spacing:1.275px;-webkit-text-stroke:0.65px #f6f6f6;">used</span></li></ul></section><section class="panel" style="left:49.9px;top:973.6px;width:1232px;height:608.8px;"><h2 class="t" style="left:16.6px;top:22.16px;font-size:31px;line-height:37px;color:#dededf;letter-spacing:0.744px;">Load</h2><button type="button" class="kb" aria-label="Panel menu" style="left:1145.5px;top:8px;width:66.4px;height:64.3px;"><svg class="abs" style="left:25px;top:14.5px" width="12" height="32" viewBox="0 0 12 32"><g fill="none" stroke="#c4c4c6" stroke-width="2.1"><circle cx="6" cy="6.2" r="3.1"/><circle cx="6" cy="15.7" r="3.1"/><circle cx="6" cy="25.5" r="3.1"/></g></svg></button><svg class="chart" role="img" aria-label="Load chart" style="left:0;top:0" width="1228" height="604.8" viewBox="51.9 975.6 1228 604.8"><defs><linearGradient id="lgn" gradientUnits="userSpaceOnUse" x1="0" y1="1352" x2="0" y2="1444.5"><stop offset="0" stop-color="#73c876" stop-opacity="0.12"/><stop offset="1" stop-color="#73c876" stop-opacity="0.012"/></linearGradient><linearGradient id="ltl" gradientUnits="userSpaceOnUse" x1="0" y1="1260" x2="0" y2="1444.5"><stop offset="0" stop-color="#4fa8bd" stop-opacity="0.11"/><stop offset="1" stop-color="#4fa8bd" stop-opacity="0.01"/></linearGradient><linearGradient id="lyl" gradientUnits="userSpaceOnUse" x1="0" y1="1096" x2="0" y2="1444.5"><stop offset="0" stop-color="#e6b94f" stop-opacity="0.15"/><stop offset="1" stop-color="#e6b94f" stop-opacity="0.008"/></linearGradient></defs><path d="M136.3 1077H1245M136.3 1138.2H1245M136.3 1199.5H1245M136.3 1260.8H1245M136.3 1322H1245M136.3 1383.2H1245" stroke="#252629" stroke-width="2" fill="none"/><path d="M136.3 1077V1444.5M295.4 1077V1444.5M479.6 1077V1444.5M663.8 1077V1444.5M848 1077V1444.5M1032.2 1077V1444.5M1216.4 1077V1444.5M1245 1077V1444.5" stroke="#232428" stroke-width="2" stroke-dasharray="10 10" fill="none"/><path d="M136.9 1389.6L143.2 1395.5L149.8 1400.1L156.5 1399.5L163.1 1406.1L171 1411.4L176.3 1407.4L180.9 1405.4L186.9 1404.1L193.5 1400.8L197.5 1401.5L201.4 1406.7L209.4 1407.4L222.6 1408.7L229.2 1410.7L235.8 1414.7L242.4 1416.7L250.4 1419.3L254.3 1423.3L259 1423.9L264.9 1419.3L268.9 1417.3L274.2 1420L282.1 1418.7L290.7 1413.4L294 1402.1L297.3 1384.9L300.6 1361.1L303.7 1351.9L307.2 1359.8L312.5 1362.4L317.8 1369L324.4 1379.6L327.8 1378L333.7 1386.2L340.3 1394.8L346.3 1394.8L352.2 1402.8L358.8 1404.8L365.4 1407.4L372.1 1410.7L378.7 1410.7L386.6 1415.3L394.6 1414L401.2 1412L405.8 1410.1L413.1 1414L419.7 1418L425 1417.3L430 1419.3L435.3 1420.6L441.9 1425.3L446.5 1425.3L453.1 1427.9L460.4 1427.2L467 1427.2L473.7 1422.6L479.6 1420.6L484.9 1411.4L489.5 1414L494.8 1414.7L498.8 1418.7L506.1 1420.6L512.7 1421.3L519.9 1423.3L524.6 1425.9L531.2 1423.3L537.1 1424.6L540.4 1422L546.4 1422L549 1420L554.3 1425.9L561 1427.2L567.6 1427.9L574.8 1432.5L579.5 1431.9L585.4 1427.9L590.1 1427.2L598.3 1421.3L603.3 1423.9L607.2 1423.9L615.2 1426.6L624.4 1426.6L629.7 1425.3L633.7 1416.7L637 1402.1L640.3 1379.6L643 1374.3L645.6 1374.3L649.6 1378.3L654.9 1384.9L660.2 1387.6L666.8 1392.2L672.1 1395.5L677.4 1401.5L682.6 1406.7L689.3 1410.7L695.9 1415.3L702.5 1416L709.1 1416.7L714.4 1420L721 1418L726.3 1414.7L730 1416L736.6 1414L743.2 1414.7L749.8 1417.3L756.5 1419.3L761.1 1423.3L766.4 1422.6L771 1416.7L775.6 1414.7L780.3 1418L785.6 1422L790.8 1424.6L796.1 1421.3L804.1 1422.6L813.3 1423.3L819.9 1424.6L826.6 1423.9L835.8 1423.9L838.5 1425.3L842.4 1423.3L849 1425.9L857 1427.2L862.3 1426.6L866.2 1424.6L870.2 1425.9L882.1 1425.9L886.1 1425.3L890.7 1423.3L894 1425.9L899.3 1422L902.6 1423.3L905.9 1420L912.5 1417.3L917.8 1422L924.4 1424.6L931.1 1426.6L939 1427.2L946.9 1427.2L954.9 1429.9L960 1433.2L966.6 1429.2L973.2 1427.9L979.8 1428.6L983.1 1424.6L986.5 1417.3L990.4 1420L995.1 1418L1001 1418L1005.6 1417.3L1010.3 1411.4L1014.2 1408.7L1016.9 1403.4L1019.5 1387.6L1022.8 1369L1025.5 1358.5L1027.5 1358.5L1030.1 1363.1L1033.4 1367.7L1036.7 1369.7L1040.7 1374.3L1046 1378.3L1049.9 1382.9L1053.3 1385.6L1057.9 1388.2L1062.5 1388.9L1065.8 1390.2L1069.1 1393.5L1073.8 1395.5L1077.1 1397.5L1080.4 1397.5L1083.7 1399.5L1089 1399.5L1093.6 1402.1L1098.9 1403.4L1102.6 1402.1L1106.8 1405.4L1112.1 1407.4L1118.1 1410.7L1124 1410.7L1130 1412L1135.9 1410.1L1141.2 1411.4L1146.5 1413.4L1150.5 1415.3L1155.1 1414.7L1158.4 1412.7L1164.4 1413.4L1170.3 1413.4L1175.6 1415.3L1182.2 1412L1186.9 1411.4L1191.5 1413.4L1198.1 1410.7L1204.7 1414L1210.7 1420L1216.6 1416.7L1222.6 1412.7L1225.9 1412L1230.5 1416.7L1235.8 1422L1239.1 1423.3L1241.5 1422L1241.5 1444.5L136.9 1444.5Z" fill="url(#lgn)" stroke="none"/><path d="M136.9 1387.6L141.9 1396.8L146.5 1407.4L149.8 1406.1L152.8 1399.5L156.5 1407.4L169.7 1423.3L174.3 1415.3L180.9 1412.7L182.9 1400.8L185.6 1402.1L189.5 1392.9L193.2 1388.2L196.1 1392.9L201.4 1404.8L205.4 1407.4L214.7 1406.7L222.6 1410.7L229.2 1416.7L235.8 1425.9L242.4 1424.6L249 1427.9L254.3 1430.6L259 1428.6L264.9 1412.7L268.9 1404.8L272.2 1412L275.5 1414L279.5 1411.4L282.1 1410.7L285.4 1403.4L290.7 1396.8L293.4 1369L296.7 1316.1L300 1272.5L303.3 1262.6L306.6 1293.7L311.2 1318.8L315.2 1342.6L320.5 1366.4L324.4 1386.2L327.8 1382.9L333.7 1399.5L340.3 1413.4L346.9 1414L352.2 1422L358.8 1418L364.1 1420.6L369.4 1427.2L377.4 1417.3L381.3 1420.6L386.6 1427.2L389.9 1418L395.9 1416L401.2 1413.4L405.8 1405.4L410.4 1415.3L417 1423.3L423 1415.3L430 1423.3L435.3 1427.2L441.9 1429.9L446.5 1428.6L453.1 1437.2L460.4 1429.9L465.7 1431.2L469.7 1422L473.7 1412.7L478.3 1408.1L481.9 1391.5L484.9 1388.9L488.2 1394.2L491.5 1400.8L494.8 1404.1L500.1 1416.7L506.1 1423.3L512.7 1419.3L518.6 1422.6L524.6 1427.9L531.2 1418.7L534.5 1415.3L537.1 1419.3L540.4 1412L543.8 1408.7L549 1407.4L552.4 1415.3L557 1423.3L562.3 1428.6L567.6 1431.2L574.8 1437.8L579.5 1435.2L585.4 1424.6L590.1 1423.3L598.3 1409.4L602 1413.4L607.2 1416L613.9 1422.6L620.5 1417.3L624.4 1420.6L629.7 1416.7L633.7 1395.5L637 1355.8L639.7 1313.5L641.6 1295.6L644.3 1305.6L647.6 1324.1L650.9 1341.3L654.2 1358.5L657.5 1367.1L661.5 1381L666.8 1388.9L672.1 1402.1L677.4 1416L682.6 1422L687.9 1428.6L691.9 1430.6L698.5 1427.9L705.8 1425.9L713.1 1426.6L719 1423.3L724.3 1410.1L727.6 1404.8L730 1406.7L733.3 1408.1L737.9 1412.7L743.2 1407.4L746.5 1410.7L749.8 1415.3L754.5 1418L761.1 1427.2L766.4 1424.6L770.3 1403.4L774.3 1398.8L777.6 1405.4L782.9 1416L788.9 1423.3L795.5 1415.3L801.4 1415.3L805.4 1418.7L811 1413.4L816 1418.7L821.3 1423.3L826.3 1416L829.2 1414.7L835.2 1413.4L841.8 1416L847.7 1420L853.7 1423.3L859 1427.9L862.9 1424.6L866.2 1417.3L870.2 1418.7L875.5 1416.7L881.5 1418.7L886.1 1420L893.4 1414.7L899.3 1407.4L905.9 1403.4L911.9 1404.1L915.8 1410.1L921.8 1416L927.8 1420.6L932.4 1426.6L939 1427.2L945.6 1428.6L952.2 1433.9L958.8 1432.5L960 1430.6L966.6 1427.2L973.2 1425.9L979.8 1427.2L983.1 1422L985.8 1400.8L988.4 1404.1L991.7 1406.7L995.1 1403.4L998.4 1400.8L1001 1403.4L1004.3 1412.7L1007.4 1402.1L1010.3 1390.9L1012.9 1394.2L1015.6 1382.3L1018.2 1349.2L1020.8 1316.1L1023.5 1287L1025.5 1276.5L1028.1 1296.3L1030.8 1313.5L1033.4 1328L1036.1 1338.6L1038.7 1343.3L1041.3 1358.5L1044.7 1371.7L1048 1380.3L1051.3 1388.2L1054.6 1392.9L1057.9 1396.8L1061.2 1399.5L1063.8 1396.8L1067.1 1404.1L1070.4 1410.1L1073.8 1411.4L1077.1 1410.7L1080.4 1407.4L1083.7 1410.1L1087 1408.1L1090.3 1406.7L1093.6 1407.4L1096.9 1405.4L1102.2 1402.1L1105.5 1408.7L1112.1 1414.7L1118.1 1420L1122.7 1421.3L1127.3 1417.3L1130 1418L1135.9 1408.1L1139.9 1412L1145.2 1418L1150.5 1423.3L1155.1 1419.3L1158.4 1411.4L1164.4 1410.7L1170.3 1413.4L1174.3 1416.7L1179.6 1408.1L1183.5 1402.8L1186.9 1403.4L1190.2 1410.7L1194.8 1408.1L1200.7 1412L1206 1415.3L1210.7 1424.6L1216 1417.3L1222.6 1403.4L1225.9 1409.4L1230.5 1418L1235.1 1424.6L1238.4 1427.2L1241.5 1423.3L1241.5 1444.5L136.9 1444.5Z" fill="url(#ltl)" stroke="none"/><path d="M136.9 1391.5L139.9 1414L143.2 1427.9L145.9 1425.9L148.5 1419.3L150.9 1406.1L152.8 1387.6L155.1 1408.7L158.4 1420.6L161.7 1427.9L164.7 1430.6L168.4 1437.8L171.7 1433.2L174.3 1395.5L177 1398.1L179.6 1407.4L182.9 1364.4L186.6 1392.2L189.5 1366.4L192.8 1367.7L196.1 1390.2L201.4 1425.3L205.4 1422.6L208 1418L211.3 1395.5L214.7 1404.8L217.3 1417.3L220.6 1418L223.3 1409.4L226.3 1427.2L228.5 1420L231.9 1431.2L235.2 1437.2L238.5 1420L241.8 1427.9L245.1 1429.9L250.4 1425.9L254.1 1437.8L257.6 1433.2L260.3 1423.3L263.6 1396.8L266.2 1381L268.9 1380.3L272.2 1420.6L275.5 1422L278.1 1404.1L281.5 1402.1L284.5 1375L287.4 1394.2L290.3 1373L294.3 1245L297.3 1185.1L300.4 1096.4L303.5 1170L306.5 1264.9L309.6 1371L312.3 1382.3L315.2 1414L318.5 1417.3L324.4 1439.2L327.8 1389.6L331.1 1410.1L339.7 1439.2L346.3 1406.1L352.2 1439.2L358.8 1409.4L361.5 1422L364.1 1420.6L368.1 1435.8L370.7 1433.9L377.1 1400.8L381.3 1428.6L386 1439.2L389.5 1391.5L395.9 1409.4L398.5 1408.7L405.1 1387.6L410.4 1425.9L413.1 1429.9L416.4 1437.2L423 1402.1L427.6 1433.9L430 1434.5L432.6 1431.2L435.3 1420L438.6 1436.5L441.9 1439.2L444.6 1428.6L446.5 1427.9L451.2 1439.8L453.8 1439.8L457.1 1427.2L460.4 1416L463.7 1431.2L466.4 1431.9L469.7 1408.7L472.3 1386.2L475.6 1386.2L478.3 1396.2L481.9 1341.9L484.9 1362.4L488.2 1388.9L490.8 1417.3L493.5 1415.3L497.5 1433.2L500.1 1437.2L503.4 1433.9L506.1 1437.2L509.4 1420.6L512.7 1407.4L516 1418L518.6 1430.6L521.3 1431.2L524.6 1437.2L527.9 1420.6L531.2 1398.8L533.8 1398.8L537.1 1417.3L539.8 1392.9L543.1 1392.9L546.4 1403.4L549 1398.8L552.4 1425.9L555.7 1439.2L558.3 1441.1L561 1436.5L564.9 1439.8L568.9 1443.1L572.2 1444.4L574.8 1441.8L579.5 1425.9L582.8 1400.8L585.4 1403.4L588.7 1422L591.6 1406.1L594.7 1404.8L598.3 1386.9L602 1410.1L604.6 1418.7L607.2 1414L610.6 1422L613.9 1431.2L616.5 1420.6L619.8 1416L623.1 1433.2L626.4 1405.4L629.1 1411.4L632.4 1382.3L633.6 1318.4L635.3 1239L637.3 1181L641.5 1159.7L643.5 1199.3L644.8 1278.7L646.9 1329.4L650.2 1382.3L653.5 1412L656.9 1408.7L660.2 1422.6L663.5 1412L666.8 1410.7L672.1 1425.9L678.7 1441.8L682.6 1433.9L687.3 1441.8L690.6 1440.5L693.9 1427.9L696.5 1433.2L699.8 1422L702.5 1425.9L705.8 1416L709.1 1429.2L713.1 1421.3L716.4 1420L719 1411.4L721 1416.7L724.3 1371L727.6 1392.9L730 1395.5L733.3 1404.8L736.6 1427.2L739.9 1408.7L743.2 1388.9L746.5 1412.7L749.2 1431.9L751.8 1422L754.5 1422.6L757.8 1434.5L761.1 1439.8L764.4 1431.2L767.7 1415.3L770.3 1345.9L773.7 1369L777 1399.5L780.3 1425.9L782.9 1437.2L786.2 1433.9L788.9 1437.2L792.2 1421.3L795.5 1396.8L798.8 1405.4L802.1 1418L804.7 1429.2L808 1410.1L811 1399.5L814 1412.7L817.3 1428.6L819.9 1435.2L823.3 1428.6L826.3 1395.5L829.2 1406.1L831.9 1417.3L835.2 1405.4L838.5 1414.7L841.8 1413.4L845.1 1422L847.7 1426.6L850.4 1420L853.7 1431.2L857 1433.9L860.3 1431.2L862.9 1420.6L866 1395.5L868.9 1415.3L872.2 1414L874.8 1421.3L878.1 1414L881.5 1422.6L884.1 1427.2L887.4 1408.7L890.7 1406.7L893.4 1414L896.4 1390.9L899.3 1392.9L902.6 1414.7L905.9 1382.9L909.2 1399.5L911.9 1394.8L915.2 1415.3L917.8 1420.6L921.1 1425.3L924.4 1422L927.8 1431.9L931.1 1439.8L934.4 1435.8L939 1432.5L942.6 1425.3L945.6 1429.9L948.9 1439.2L952.2 1433.9L954.9 1429.2L958.2 1433.9L960 1425.9L963.3 1421.3L973.2 1421.3L976.5 1429.2L979.8 1425.9L982.8 1388.9L985.8 1342.6L988.8 1382.3L991.7 1414.7L994.7 1390.2L997.7 1388.9L1001 1408.7L1004.3 1429.2L1007.4 1395.5L1010 1350.5L1012.9 1387.6L1015.6 1355.8L1016.7 1318.4L1018.1 1239L1019.8 1179.5L1022.7 1145.1L1026.1 1172.9L1027.5 1239L1029.4 1309.5L1032.1 1388.9L1034.7 1400.1L1038 1381L1041 1412.7L1044 1419.3L1047.3 1414.7L1050.6 1414.7L1053.3 1419.3L1057.2 1411.4L1059.9 1410.7L1062.9 1401.5L1065.8 1414L1069.1 1429.2L1072.4 1418.7L1075.1 1416L1078.4 1396.8L1081 1411.4L1084.3 1408.7L1087.6 1399.5L1090.3 1404.1L1093.6 1400.8L1096.9 1400.1L1100.2 1393.5L1102.6 1392.9L1105.5 1414L1108.8 1422.6L1112.1 1425.9L1115 1431.2L1118.1 1425.9L1121.4 1423.3L1124 1405.4L1127.3 1419.3L1130 1416L1133.3 1394.2L1135.9 1392.9L1139.2 1419.3L1142.5 1423.3L1145.8 1431.2L1148.9 1439.2L1151.8 1416L1155.1 1404.1L1158 1391.5L1161.1 1403.4L1164.4 1404.1L1167 1413.4L1170.3 1412.7L1173.2 1423.3L1176.3 1407.4L1179.6 1401.5L1182.6 1381L1185.5 1399.5L1188.6 1426.6L1191.5 1407.4L1194.1 1408.1L1197.4 1417.3L1200.7 1414L1204 1425.9L1207.1 1436.5L1210 1441.1L1212.9 1411.4L1216 1406.1L1219.3 1390.2L1222.6 1377L1225.6 1408.7L1228.5 1429.9L1231.8 1440.5L1235.1 1441.8L1238.4 1441.8L1241.5 1419.3L1241.5 1444.5L136.9 1444.5Z" fill="url(#lyl)" stroke="none"/><path d="M135.3 1444.5H1246M295.4 1444.5v9M479.6 1444.5v9M663.8 1444.5v9M848 1444.5v9M1032.2 1444.5v9M1216.4 1444.5v9" stroke="#77787e" stroke-width="2" fill="none"/><path d="M136.9 1389.6L143.2 1395.5L149.8 1400.1L156.5 1399.5L163.1 1406.1L171 1411.4L176.3 1407.4L180.9 1405.4L186.9 1404.1L193.5 1400.8L197.5 1401.5L201.4 1406.7L209.4 1407.4L222.6 1408.7L229.2 1410.7L235.8 1414.7L242.4 1416.7L250.4 1419.3L254.3 1423.3L259 1423.9L264.9 1419.3L268.9 1417.3L274.2 1420L282.1 1418.7L290.7 1413.4L294 1402.1L297.3 1384.9L300.6 1361.1L303.7 1351.9L307.2 1359.8L312.5 1362.4L317.8 1369L324.4 1379.6L327.8 1378L333.7 1386.2L340.3 1394.8L346.3 1394.8L352.2 1402.8L358.8 1404.8L365.4 1407.4L372.1 1410.7L378.7 1410.7L386.6 1415.3L394.6 1414L401.2 1412L405.8 1410.1L413.1 1414L419.7 1418L425 1417.3L430 1419.3L435.3 1420.6L441.9 1425.3L446.5 1425.3L453.1 1427.9L460.4 1427.2L467 1427.2L473.7 1422.6L479.6 1420.6L484.9 1411.4L489.5 1414L494.8 1414.7L498.8 1418.7L506.1 1420.6L512.7 1421.3L519.9 1423.3L524.6 1425.9L531.2 1423.3L537.1 1424.6L540.4 1422L546.4 1422L549 1420L554.3 1425.9L561 1427.2L567.6 1427.9L574.8 1432.5L579.5 1431.9L585.4 1427.9L590.1 1427.2L598.3 1421.3L603.3 1423.9L607.2 1423.9L615.2 1426.6L624.4 1426.6L629.7 1425.3L633.7 1416.7L637 1402.1L640.3 1379.6L643 1374.3L645.6 1374.3L649.6 1378.3L654.9 1384.9L660.2 1387.6L666.8 1392.2L672.1 1395.5L677.4 1401.5L682.6 1406.7L689.3 1410.7L695.9 1415.3L702.5 1416L709.1 1416.7L714.4 1420L721 1418L726.3 1414.7L730 1416L736.6 1414L743.2 1414.7L749.8 1417.3L756.5 1419.3L761.1 1423.3L766.4 1422.6L771 1416.7L775.6 1414.7L780.3 1418L785.6 1422L790.8 1424.6L796.1 1421.3L804.1 1422.6L813.3 1423.3L819.9 1424.6L826.6 1423.9L835.8 1423.9L838.5 1425.3L842.4 1423.3L849 1425.9L857 1427.2L862.3 1426.6L866.2 1424.6L870.2 1425.9L882.1 1425.9L886.1 1425.3L890.7 1423.3L894 1425.9L899.3 1422L902.6 1423.3L905.9 1420L912.5 1417.3L917.8 1422L924.4 1424.6L931.1 1426.6L939 1427.2L946.9 1427.2L954.9 1429.9L960 1433.2L966.6 1429.2L973.2 1427.9L979.8 1428.6L983.1 1424.6L986.5 1417.3L990.4 1420L995.1 1418L1001 1418L1005.6 1417.3L1010.3 1411.4L1014.2 1408.7L1016.9 1403.4L1019.5 1387.6L1022.8 1369L1025.5 1358.5L1027.5 1358.5L1030.1 1363.1L1033.4 1367.7L1036.7 1369.7L1040.7 1374.3L1046 1378.3L1049.9 1382.9L1053.3 1385.6L1057.9 1388.2L1062.5 1388.9L1065.8 1390.2L1069.1 1393.5L1073.8 1395.5L1077.1 1397.5L1080.4 1397.5L1083.7 1399.5L1089 1399.5L1093.6 1402.1L1098.9 1403.4L1102.6 1402.1L1106.8 1405.4L1112.1 1407.4L1118.1 1410.7L1124 1410.7L1130 1412L1135.9 1410.1L1141.2 1411.4L1146.5 1413.4L1150.5 1415.3L1155.1 1414.7L1158.4 1412.7L1164.4 1413.4L1170.3 1413.4L1175.6 1415.3L1182.2 1412L1186.9 1411.4L1191.5 1413.4L1198.1 1410.7L1204.7 1414L1210.7 1420L1216.6 1416.7L1222.6 1412.7L1225.9 1412L1230.5 1416.7L1235.8 1422L1239.1 1423.3L1241.5 1422" fill="none" stroke="#73c876" stroke-width="2" stroke-linejoin="round" stroke-linecap="round"/><path d="M136.9 1387.6L141.9 1396.8L146.5 1407.4L149.8 1406.1L152.8 1399.5L156.5 1407.4L169.7 1423.3L174.3 1415.3L180.9 1412.7L182.9 1400.8L185.6 1402.1L189.5 1392.9L193.2 1388.2L196.1 1392.9L201.4 1404.8L205.4 1407.4L214.7 1406.7L222.6 1410.7L229.2 1416.7L235.8 1425.9L242.4 1424.6L249 1427.9L254.3 1430.6L259 1428.6L264.9 1412.7L268.9 1404.8L272.2 1412L275.5 1414L279.5 1411.4L282.1 1410.7L285.4 1403.4L290.7 1396.8L293.4 1369L296.7 1316.1L300 1272.5L303.3 1262.6L306.6 1293.7L311.2 1318.8L315.2 1342.6L320.5 1366.4L324.4 1386.2L327.8 1382.9L333.7 1399.5L340.3 1413.4L346.9 1414L352.2 1422L358.8 1418L364.1 1420.6L369.4 1427.2L377.4 1417.3L381.3 1420.6L386.6 1427.2L389.9 1418L395.9 1416L401.2 1413.4L405.8 1405.4L410.4 1415.3L417 1423.3L423 1415.3L430 1423.3L435.3 1427.2L441.9 1429.9L446.5 1428.6L453.1 1437.2L460.4 1429.9L465.7 1431.2L469.7 1422L473.7 1412.7L478.3 1408.1L481.9 1391.5L484.9 1388.9L488.2 1394.2L491.5 1400.8L494.8 1404.1L500.1 1416.7L506.1 1423.3L512.7 1419.3L518.6 1422.6L524.6 1427.9L531.2 1418.7L534.5 1415.3L537.1 1419.3L540.4 1412L543.8 1408.7L549 1407.4L552.4 1415.3L557 1423.3L562.3 1428.6L567.6 1431.2L574.8 1437.8L579.5 1435.2L585.4 1424.6L590.1 1423.3L598.3 1409.4L602 1413.4L607.2 1416L613.9 1422.6L620.5 1417.3L624.4 1420.6L629.7 1416.7L633.7 1395.5L637 1355.8L639.7 1313.5L641.6 1295.6L644.3 1305.6L647.6 1324.1L650.9 1341.3L654.2 1358.5L657.5 1367.1L661.5 1381L666.8 1388.9L672.1 1402.1L677.4 1416L682.6 1422L687.9 1428.6L691.9 1430.6L698.5 1427.9L705.8 1425.9L713.1 1426.6L719 1423.3L724.3 1410.1L727.6 1404.8L730 1406.7L733.3 1408.1L737.9 1412.7L743.2 1407.4L746.5 1410.7L749.8 1415.3L754.5 1418L761.1 1427.2L766.4 1424.6L770.3 1403.4L774.3 1398.8L777.6 1405.4L782.9 1416L788.9 1423.3L795.5 1415.3L801.4 1415.3L805.4 1418.7L811 1413.4L816 1418.7L821.3 1423.3L826.3 1416L829.2 1414.7L835.2 1413.4L841.8 1416L847.7 1420L853.7 1423.3L859 1427.9L862.9 1424.6L866.2 1417.3L870.2 1418.7L875.5 1416.7L881.5 1418.7L886.1 1420L893.4 1414.7L899.3 1407.4L905.9 1403.4L911.9 1404.1L915.8 1410.1L921.8 1416L927.8 1420.6L932.4 1426.6L939 1427.2L945.6 1428.6L952.2 1433.9L958.8 1432.5L960 1430.6L966.6 1427.2L973.2 1425.9L979.8 1427.2L983.1 1422L985.8 1400.8L988.4 1404.1L991.7 1406.7L995.1 1403.4L998.4 1400.8L1001 1403.4L1004.3 1412.7L1007.4 1402.1L1010.3 1390.9L1012.9 1394.2L1015.6 1382.3L1018.2 1349.2L1020.8 1316.1L1023.5 1287L1025.5 1276.5L1028.1 1296.3L1030.8 1313.5L1033.4 1328L1036.1 1338.6L1038.7 1343.3L1041.3 1358.5L1044.7 1371.7L1048 1380.3L1051.3 1388.2L1054.6 1392.9L1057.9 1396.8L1061.2 1399.5L1063.8 1396.8L1067.1 1404.1L1070.4 1410.1L1073.8 1411.4L1077.1 1410.7L1080.4 1407.4L1083.7 1410.1L1087 1408.1L1090.3 1406.7L1093.6 1407.4L1096.9 1405.4L1102.2 1402.1L1105.5 1408.7L1112.1 1414.7L1118.1 1420L1122.7 1421.3L1127.3 1417.3L1130 1418L1135.9 1408.1L1139.9 1412L1145.2 1418L1150.5 1423.3L1155.1 1419.3L1158.4 1411.4L1164.4 1410.7L1170.3 1413.4L1174.3 1416.7L1179.6 1408.1L1183.5 1402.8L1186.9 1403.4L1190.2 1410.7L1194.8 1408.1L1200.7 1412L1206 1415.3L1210.7 1424.6L1216 1417.3L1222.6 1403.4L1225.9 1409.4L1230.5 1418L1235.1 1424.6L1238.4 1427.2L1241.5 1423.3" fill="none" stroke="#4fa8bd" stroke-width="2" stroke-linejoin="round" stroke-linecap="round"/><path d="M136.9 1391.5L139.9 1414L143.2 1427.9L145.9 1425.9L148.5 1419.3L150.9 1406.1L152.8 1387.6L155.1 1408.7L158.4 1420.6L161.7 1427.9L164.7 1430.6L168.4 1437.8L171.7 1433.2L174.3 1395.5L177 1398.1L179.6 1407.4L182.9 1364.4L186.6 1392.2L189.5 1366.4L192.8 1367.7L196.1 1390.2L201.4 1425.3L205.4 1422.6L208 1418L211.3 1395.5L214.7 1404.8L217.3 1417.3L220.6 1418L223.3 1409.4L226.3 1427.2L228.5 1420L231.9 1431.2L235.2 1437.2L238.5 1420L241.8 1427.9L245.1 1429.9L250.4 1425.9L254.1 1437.8L257.6 1433.2L260.3 1423.3L263.6 1396.8L266.2 1381L268.9 1380.3L272.2 1420.6L275.5 1422L278.1 1404.1L281.5 1402.1L284.5 1375L287.4 1394.2L290.3 1373L294.3 1245L297.3 1185.1L300.4 1096.4L303.5 1170L306.5 1264.9L309.6 1371L312.3 1382.3L315.2 1414L318.5 1417.3L324.4 1439.2L327.8 1389.6L331.1 1410.1L339.7 1439.2L346.3 1406.1L352.2 1439.2L358.8 1409.4L361.5 1422L364.1 1420.6L368.1 1435.8L370.7 1433.9L377.1 1400.8L381.3 1428.6L386 1439.2L389.5 1391.5L395.9 1409.4L398.5 1408.7L405.1 1387.6L410.4 1425.9L413.1 1429.9L416.4 1437.2L423 1402.1L427.6 1433.9L430 1434.5L432.6 1431.2L435.3 1420L438.6 1436.5L441.9 1439.2L444.6 1428.6L446.5 1427.9L451.2 1439.8L453.8 1439.8L457.1 1427.2L460.4 1416L463.7 1431.2L466.4 1431.9L469.7 1408.7L472.3 1386.2L475.6 1386.2L478.3 1396.2L481.9 1341.9L484.9 1362.4L488.2 1388.9L490.8 1417.3L493.5 1415.3L497.5 1433.2L500.1 1437.2L503.4 1433.9L506.1 1437.2L509.4 1420.6L512.7 1407.4L516 1418L518.6 1430.6L521.3 1431.2L524.6 1437.2L527.9 1420.6L531.2 1398.8L533.8 1398.8L537.1 1417.3L539.8 1392.9L543.1 1392.9L546.4 1403.4L549 1398.8L552.4 1425.9L555.7 1439.2L558.3 1441.1L561 1436.5L564.9 1439.8L568.9 1443.1L572.2 1444.4L574.8 1441.8L579.5 1425.9L582.8 1400.8L585.4 1403.4L588.7 1422L591.6 1406.1L594.7 1404.8L598.3 1386.9L602 1410.1L604.6 1418.7L607.2 1414L610.6 1422L613.9 1431.2L616.5 1420.6L619.8 1416L623.1 1433.2L626.4 1405.4L629.1 1411.4L632.4 1382.3L633.6 1318.4L635.3 1239L637.3 1181L641.5 1159.7L643.5 1199.3L644.8 1278.7L646.9 1329.4L650.2 1382.3L653.5 1412L656.9 1408.7L660.2 1422.6L663.5 1412L666.8 1410.7L672.1 1425.9L678.7 1441.8L682.6 1433.9L687.3 1441.8L690.6 1440.5L693.9 1427.9L696.5 1433.2L699.8 1422L702.5 1425.9L705.8 1416L709.1 1429.2L713.1 1421.3L716.4 1420L719 1411.4L721 1416.7L724.3 1371L727.6 1392.9L730 1395.5L733.3 1404.8L736.6 1427.2L739.9 1408.7L743.2 1388.9L746.5 1412.7L749.2 1431.9L751.8 1422L754.5 1422.6L757.8 1434.5L761.1 1439.8L764.4 1431.2L767.7 1415.3L770.3 1345.9L773.7 1369L777 1399.5L780.3 1425.9L782.9 1437.2L786.2 1433.9L788.9 1437.2L792.2 1421.3L795.5 1396.8L798.8 1405.4L802.1 1418L804.7 1429.2L808 1410.1L811 1399.5L814 1412.7L817.3 1428.6L819.9 1435.2L823.3 1428.6L826.3 1395.5L829.2 1406.1L831.9 1417.3L835.2 1405.4L838.5 1414.7L841.8 1413.4L845.1 1422L847.7 1426.6L850.4 1420L853.7 1431.2L857 1433.9L860.3 1431.2L862.9 1420.6L866 1395.5L868.9 1415.3L872.2 1414L874.8 1421.3L878.1 1414L881.5 1422.6L884.1 1427.2L887.4 1408.7L890.7 1406.7L893.4 1414L896.4 1390.9L899.3 1392.9L902.6 1414.7L905.9 1382.9L909.2 1399.5L911.9 1394.8L915.2 1415.3L917.8 1420.6L921.1 1425.3L924.4 1422L927.8 1431.9L931.1 1439.8L934.4 1435.8L939 1432.5L942.6 1425.3L945.6 1429.9L948.9 1439.2L952.2 1433.9L954.9 1429.2L958.2 1433.9L960 1425.9L963.3 1421.3L973.2 1421.3L976.5 1429.2L979.8 1425.9L982.8 1388.9L985.8 1342.6L988.8 1382.3L991.7 1414.7L994.7 1390.2L997.7 1388.9L1001 1408.7L1004.3 1429.2L1007.4 1395.5L1010 1350.5L1012.9 1387.6L1015.6 1355.8L1016.7 1318.4L1018.1 1239L1019.8 1179.5L1022.7 1145.1L1026.1 1172.9L1027.5 1239L1029.4 1309.5L1032.1 1388.9L1034.7 1400.1L1038 1381L1041 1412.7L1044 1419.3L1047.3 1414.7L1050.6 1414.7L1053.3 1419.3L1057.2 1411.4L1059.9 1410.7L1062.9 1401.5L1065.8 1414L1069.1 1429.2L1072.4 1418.7L1075.1 1416L1078.4 1396.8L1081 1411.4L1084.3 1408.7L1087.6 1399.5L1090.3 1404.1L1093.6 1400.8L1096.9 1400.1L1100.2 1393.5L1102.6 1392.9L1105.5 1414L1108.8 1422.6L1112.1 1425.9L1115 1431.2L1118.1 1425.9L1121.4 1423.3L1124 1405.4L1127.3 1419.3L1130 1416L1133.3 1394.2L1135.9 1392.9L1139.2 1419.3L1142.5 1423.3L1145.8 1431.2L1148.9 1439.2L1151.8 1416L1155.1 1404.1L1158 1391.5L1161.1 1403.4L1164.4 1404.1L1167 1413.4L1170.3 1412.7L1173.2 1423.3L1176.3 1407.4L1179.6 1401.5L1182.6 1381L1185.5 1399.5L1188.6 1426.6L1191.5 1407.4L1194.1 1408.1L1197.4 1417.3L1200.7 1414L1204 1425.9L1207.1 1436.5L1210 1441.1L1212.9 1411.4L1216 1406.1L1219.3 1390.2L1222.6 1377L1225.6 1408.7L1228.5 1429.9L1231.8 1440.5L1235.1 1441.8L1238.4 1441.8L1241.5 1419.3" fill="none" stroke="#e6b94f" stroke-width="2" stroke-linejoin="round" stroke-linecap="round"/><g class="axl"><text x="121" y="1081.38" font-size="22" fill="#7e7f86" text-anchor="end">1.8</text><text x="121" y="1142.63" font-size="22" fill="#7e7f86" text-anchor="end">1.5</text><text x="121" y="1203.88" font-size="22" fill="#7e7f86" text-anchor="end">1.2</text><text x="121" y="1265.13" font-size="22" fill="#7e7f86" text-anchor="end">0.9</text><text x="121" y="1326.38" font-size="22" fill="#7e7f86" text-anchor="end">0.6</text><text x="121" y="1387.63" font-size="22" fill="#7e7f86" text-anchor="end">0.3</text><text x="121" y="1448.88" font-size="22" fill="#7e7f86" text-anchor="end">0</text><text x="295.4" y="1476.86" font-size="22.5" fill="#7e7f86" text-anchor="middle">12:00</text><text x="479.6" y="1476.86" font-size="22.5" fill="#7e7f86" text-anchor="middle">13:00</text><text x="663.8" y="1476.86" font-size="22.5" fill="#7e7f86" text-anchor="middle">14:00</text><text x="848" y="1476.86" font-size="22.5" fill="#7e7f86" text-anchor="middle">15:00</text><text x="1032.2" y="1476.86" font-size="22.5" fill="#7e7f86" text-anchor="middle">16:00</text><text x="1216.4" y="1476.86" font-size="22.5" fill="#7e7f86" text-anchor="middle">17:00</text></g></svg><ul class="lg" style="left:350.5px;top:537.6px;width:527.2px;height:50.1px;"><li><i class="dot" style="left:8.3px;top:9.25px;background:#73c876"></i><span class="t" style="left:57.4px;top:8.71px;font-size:23px;line-height:28px;color:#f6f6f6;letter-spacing:0.543px;-webkit-text-stroke:0.65px #f6f6f6;">15 minutes</span></li><li><i class="dot" style="left:195.4px;top:9.25px;background:#4fa8bd"></i><span class="t" style="left:244.7px;top:8.71px;font-size:23px;line-height:28px;color:#f6f6f6;letter-spacing:1.223px;-webkit-text-stroke:0.65px #f6f6f6;">5 minutes</span></li><li><i class="dot" style="left:374.8px;top:9.25px;background:#e6b94f"></i><span class="t" style="left:423.6px;top:8.71px;font-size:23px;line-height:28px;color:#f6f6f6;letter-spacing:0.369px;-webkit-text-stroke:0.65px #f6f6f6;">1 minute</span></li></ul></section><section class="panel" style="left:1298px;top:973.6px;width:1232px;height:608.8px;"><h2 class="t" style="left:16.6px;top:22.16px;font-size:31px;line-height:37px;color:#dededf;letter-spacing:0.510px;">I/O usage</h2><button type="button" class="kb" aria-label="Panel menu" style="left:1145.5px;top:8px;width:66.4px;height:64.3px;"><svg class="abs" style="left:25px;top:14.5px" width="12" height="32" viewBox="0 0 12 32"><g fill="none" stroke="#c4c4c6" stroke-width="2.1"><circle cx="6" cy="6.2" r="3.1"/><circle cx="6" cy="15.7" r="3.1"/><circle cx="6" cy="25.5" r="3.1"/></g></svg></button><svg class="chart" role="img" aria-label="I/O usage chart" style="left:0;top:0" width="1228" height="604.8" viewBox="1300 975.6 1228 604.8"><defs><linearGradient id="iog" gradientUnits="userSpaceOnUse" x1="0" y1="1195" x2="0" y2="1444.5"><stop offset="0" stop-color="#73c876" stop-opacity="0.07"/><stop offset="0.38" stop-color="#73c876" stop-opacity="0.125"/><stop offset="1" stop-color="#73c876" stop-opacity="0.004"/></linearGradient></defs><path d="M1412.7 1077H2493M1412.7 1150.5H2493M1412.7 1224H2493M1412.7 1297.5H2493M1412.7 1371H2493" stroke="#252629" stroke-width="2" fill="none"/><path d="M1412.7 1077V1444.5M1567.3 1077V1444.5M1746.7 1077V1444.5M1926.1 1077V1444.5M2105.5 1077V1444.5M2284.9 1077V1444.5M2464.3 1077V1444.5M2493 1077V1444.5" stroke="#232428" stroke-width="2" stroke-dasharray="10 10" fill="none"/><path d="M1413.2 1311.6L1416.9 1283.2L1419.3 1243.5L1422.2 1287.1L1425.5 1195.2L1428.8 1235.6L1431.5 1279.2L1434.4 1300.4L1437.4 1233.6L1440.1 1336.1L1443.4 1325.5L1449.7 1266.6L1452.4 1280.5L1455.3 1300.4L1457.9 1290.4L1461.2 1292.4L1464.3 1298.4L1467.2 1261.3L1470.1 1289.8L1473.1 1296.4L1476.2 1307L1479.3 1267.3L1482.4 1285.2L1485.7 1285.8L1488.3 1287.8L1491.6 1236.9L1494.7 1314.9L1497.3 1326.2L1500.2 1321.5L1503.5 1332.1L1509.5 1305L1512.4 1316.2L1515.4 1318.2L1518.8 1322.2L1524 1314.9L1527.4 1327.5L1530 1328.1L1533 1337.4L1536 1328.1L1539.3 1286.5L1542.6 1296.4L1545.2 1322.9L1548.5 1291.8L1551.2 1272.6L1554.5 1270.6L1557.4 1315.6L1560.4 1299L1563.1 1305L1566.1 1308.3L1569 1346L1571.9 1324.8L1575 1322.9L1578 1352.6L1580.9 1333.4L1584.2 1350L1587.3 1332.1L1592.8 1348.7L1596.1 1332.8L1599.2 1346.7L1606.1 1340.7L1608 1318.9L1610.7 1320.9L1614 1338.1L1616.6 1338.7L1619.9 1346L1625.9 1318.2L1628.9 1329.5L1631.9 1324.2L1635.2 1332.1L1638.5 1332.1L1641.1 1301.7L1644.2 1320.2L1647.1 1318.9L1650.4 1330.8L1656.3 1317.6L1659.2 1293.1L1662.3 1316.2L1665.3 1326.2L1670.6 1312.3L1674.8 1333.4L1677.5 1332.1L1680.1 1308.3L1686.1 1335.4L1692 1312.9L1695.3 1326.8L1700.6 1309L1703.9 1334.8L1707.4 1307L1710.3 1327.5L1712.9 1332.1L1716.2 1299L1718.9 1323.5L1721.9 1314.9L1724.8 1338.7L1730.8 1301L1734.1 1329.5L1737.1 1315.6L1740.1 1318.2L1743.1 1330.1L1746.3 1285.2L1750.6 1300.4L1754.6 1314.3L1757.9 1333.4L1761.2 1314.3L1767.2 1333.4L1769.8 1331.5L1773.1 1323.5L1776.2 1309L1779.1 1344L1782.4 1326.8L1785 1324.8L1788.1 1308.3L1791 1313.6L1794.3 1324.2L1796.9 1325.5L1800.2 1324.2L1802.9 1313.6L1806.2 1310.3L1808.8 1312.9L1811.9 1292.4L1815.1 1319.6L1818.1 1312.3L1821.1 1323.5L1824 1314.3L1826.7 1312.9L1830 1313.6L1832.6 1314.9L1835.7 1252.8L1838.9 1295.1L1841.9 1327.5L1844.9 1307L1847.9 1314.9L1851.2 1299L1853.8 1295.1L1856.9 1313.6L1859.8 1306.3L1862.7 1322.2L1865.7 1297.1L1869 1323.5L1871.9 1305L1875 1326.8L1878.3 1303L1880.9 1283.8L1883.8 1324.8L1886.9 1284.5L1889.9 1322.2L1892.8 1293.8L1895.9 1290.4L1899 1320.2L1902.1 1299L1905.4 1293.1L1908 1295.1L1911.1 1298.4L1914 1298.4L1916.6 1300.4L1919.9 1287.8L1923 1312.3L1925.2 1309L1928.5 1336.1L1931.9 1342L1937.8 1346.7L1940.8 1331.5L1944.2 1350.6L1947.1 1334.1L1950 1331.5L1953 1318.2L1956.1 1317.6L1958.7 1318.2L1961.6 1305L1964.5 1311L1970.9 1282.5L1973.5 1311L1976.6 1264.7L1979.9 1312.3L1982.5 1314.9L1985.4 1305L1988.7 1307L1991.4 1313.6L1994.7 1305.7L1997.3 1312.3L2000.6 1311L2003.9 1314.9L2005 1324.2L2007 1326.8L2010 1316.2L2012.7 1328.1L2015.6 1312.9L2018.2 1325.5L2021.5 1348.7L2030.8 1305.7L2033.4 1308.3L2036.7 1321.5L2039.7 1328.8L2042.7 1318.9L2045.7 1294.4L2048.7 1311L2051.3 1311L2054.2 1324.8L2059.9 1310.3L2063.2 1315.6L2066.5 1316.9L2069.8 1322.9L2073.1 1322.2L2076.2 1297.1L2078.8 1325.5L2081.7 1295.7L2085 1308.3L2088.1 1311.6L2090.7 1305.7L2093.6 1315.6L2099.6 1344L2105.5 1301L2108.8 1320.2L2111.9 1334.8L2114.8 1333.4L2120.7 1307.6L2129.3 1335.4L2132.6 1268.6L2136 1297.7L2138.9 1318.9L2141.9 1317.6L2144.9 1304.3L2147.9 1283.8L2150.8 1289.8L2153.8 1295.1L2156.9 1309L2162.4 1299.7L2168.4 1311.6L2171.4 1300.4L2174.3 1314.9L2183.6 1301.7L2186.5 1315.6L2189.5 1297.1L2192.6 1314.3L2195.5 1313.6L2198.8 1308.3L2201.4 1318.9L2204.7 1312.9L2207.4 1314.9L2210.7 1309L2213.3 1310.3L2216.6 1302.4L2219.3 1306.3L2222.3 1317.6L2222.5 1317.6L2225.2 1252.5L2228.8 1284.5L2231.5 1314.3L2234.4 1319.6L2237.4 1305.7L2240.4 1310.3L2243.4 1307L2246.4 1315.6L2249.3 1316.2L2252.2 1330.1L2255.3 1311L2258.3 1314.3L2261.6 1324.2L2264.5 1307L2267.4 1323.5L2270.5 1322.2L2273.5 1313.6L2276.4 1325.5L2279.7 1330.1L2283 1327.5L2285.7 1318.9L2288.6 1295.1L2291.6 1318.9L2294.7 1325.5L2297.6 1311L2300.5 1305L2303.3 1309L2306.2 1265.3L2308.8 1271.3L2312.1 1282.5L2315.1 1270.6L2318.1 1286.5L2321.1 1284.5L2324 1289.1L2327 1302.4L2330 1295.7L2333 1311.6L2336 1312.3L2338.9 1309.6L2341.9 1334.8L2345.2 1285.2L2347.9 1299L2350.9 1322.9L2354.1 1322.2L2357.1 1287.8L2360 1305.7L2363.1 1308.3L2366 1297.1L2369 1308.3L2372.1 1318.2L2375 1314.9L2378.3 1297.7L2381.2 1307.6L2384.2 1297.7L2387.3 1298.4L2390.2 1293.1L2393.1 1297.7L2396.1 1322.2L2399.2 1319.6L2402.1 1322.2L2405.1 1305.7L2408 1310.3L2411.1 1316.2L2414 1324.2L2417 1335.4L2419.9 1299L2423 1297.7L2425.9 1311L2428.8 1315.6L2431.9 1324.2L2434.9 1305.7L2437.8 1304.3L2440.8 1322.9L2443.8 1322.2L2446.8 1318.9L2450 1288.5L2453 1303L2456.1 1329.5L2459 1329.5L2461.9 1287.1L2464.9 1291.1L2468 1312.9L2470.9 1318.2L2473.9 1305L2477.1 1329.5L2480.1 1309L2482.8 1310.3L2486.1 1303.7L2489.1 1301.7L2489.4 1317.6L2489.4 1444.5L1413.2 1444.5Z" fill="url(#iog)" stroke="none"/><path d="M1411.7 1444.5H2494M1567.3 1444.5v9M1746.7 1444.5v9M1926.1 1444.5v9M2105.5 1444.5v9M2284.9 1444.5v9M2464.3 1444.5v9" stroke="#77787e" stroke-width="2" fill="none"/><path d="M1413.2 1311.6L1416.9 1283.2L1419.3 1243.5L1422.2 1287.1L1425.5 1195.2L1428.8 1235.6L1431.5 1279.2L1434.4 1300.4L1437.4 1233.6L1440.1 1336.1L1443.4 1325.5L1449.7 1266.6L1452.4 1280.5L1455.3 1300.4L1457.9 1290.4L1461.2 1292.4L1464.3 1298.4L1467.2 1261.3L1470.1 1289.8L1473.1 1296.4L1476.2 1307L1479.3 1267.3L1482.4 1285.2L1485.7 1285.8L1488.3 1287.8L1491.6 1236.9L1494.7 1314.9L1497.3 1326.2L1500.2 1321.5L1503.5 1332.1L1509.5 1305L1512.4 1316.2L1515.4 1318.2L1518.8 1322.2L1524 1314.9L1527.4 1327.5L1530 1328.1L1533 1337.4L1536 1328.1L1539.3 1286.5L1542.6 1296.4L1545.2 1322.9L1548.5 1291.8L1551.2 1272.6L1554.5 1270.6L1557.4 1315.6L1560.4 1299L1563.1 1305L1566.1 1308.3L1569 1346L1571.9 1324.8L1575 1322.9L1578 1352.6L1580.9 1333.4L1584.2 1350L1587.3 1332.1L1592.8 1348.7L1596.1 1332.8L1599.2 1346.7L1606.1 1340.7L1608 1318.9L1610.7 1320.9L1614 1338.1L1616.6 1338.7L1619.9 1346L1625.9 1318.2L1628.9 1329.5L1631.9 1324.2L1635.2 1332.1L1638.5 1332.1L1641.1 1301.7L1644.2 1320.2L1647.1 1318.9L1650.4 1330.8L1656.3 1317.6L1659.2 1293.1L1662.3 1316.2L1665.3 1326.2L1670.6 1312.3L1674.8 1333.4L1677.5 1332.1L1680.1 1308.3L1686.1 1335.4L1692 1312.9L1695.3 1326.8L1700.6 1309L1703.9 1334.8L1707.4 1307L1710.3 1327.5L1712.9 1332.1L1716.2 1299L1718.9 1323.5L1721.9 1314.9L1724.8 1338.7L1730.8 1301L1734.1 1329.5L1737.1 1315.6L1740.1 1318.2L1743.1 1330.1L1746.3 1285.2L1750.6 1300.4L1754.6 1314.3L1757.9 1333.4L1761.2 1314.3L1767.2 1333.4L1769.8 1331.5L1773.1 1323.5L1776.2 1309L1779.1 1344L1782.4 1326.8L1785 1324.8L1788.1 1308.3L1791 1313.6L1794.3 1324.2L1796.9 1325.5L1800.2 1324.2L1802.9 1313.6L1806.2 1310.3L1808.8 1312.9L1811.9 1292.4L1815.1 1319.6L1818.1 1312.3L1821.1 1323.5L1824 1314.3L1826.7 1312.9L1830 1313.6L1832.6 1314.9L1835.7 1252.8L1838.9 1295.1L1841.9 1327.5L1844.9 1307L1847.9 1314.9L1851.2 1299L1853.8 1295.1L1856.9 1313.6L1859.8 1306.3L1862.7 1322.2L1865.7 1297.1L1869 1323.5L1871.9 1305L1875 1326.8L1878.3 1303L1880.9 1283.8L1883.8 1324.8L1886.9 1284.5L1889.9 1322.2L1892.8 1293.8L1895.9 1290.4L1899 1320.2L1902.1 1299L1905.4 1293.1L1908 1295.1L1911.1 1298.4L1914 1298.4L1916.6 1300.4L1919.9 1287.8L1923 1312.3L1925.2 1309L1928.5 1336.1L1931.9 1342L1937.8 1346.7L1940.8 1331.5L1944.2 1350.6L1947.1 1334.1L1950 1331.5L1953 1318.2L1956.1 1317.6L1958.7 1318.2L1961.6 1305L1964.5 1311L1970.9 1282.5L1973.5 1311L1976.6 1264.7L1979.9 1312.3L1982.5 1314.9L1985.4 1305L1988.7 1307L1991.4 1313.6L1994.7 1305.7L1997.3 1312.3L2000.6 1311L2003.9 1314.9L2005 1324.2L2007 1326.8L2010 1316.2L2012.7 1328.1L2015.6 1312.9L2018.2 1325.5L2021.5 1348.7L2030.8 1305.7L2033.4 1308.3L2036.7 1321.5L2039.7 1328.8L2042.7 1318.9L2045.7 1294.4L2048.7 1311L2051.3 1311L2054.2 1324.8L2059.9 1310.3L2063.2 1315.6L2066.5 1316.9L2069.8 1322.9L2073.1 1322.2L2076.2 1297.1L2078.8 1325.5L2081.7 1295.7L2085 1308.3L2088.1 1311.6L2090.7 1305.7L2093.6 1315.6L2099.6 1344L2105.5 1301L2108.8 1320.2L2111.9 1334.8L2114.8 1333.4L2120.7 1307.6L2129.3 1335.4L2132.6 1268.6L2136 1297.7L2138.9 1318.9L2141.9 1317.6L2144.9 1304.3L2147.9 1283.8L2150.8 1289.8L2153.8 1295.1L2156.9 1309L2162.4 1299.7L2168.4 1311.6L2171.4 1300.4L2174.3 1314.9L2183.6 1301.7L2186.5 1315.6L2189.5 1297.1L2192.6 1314.3L2195.5 1313.6L2198.8 1308.3L2201.4 1318.9L2204.7 1312.9L2207.4 1314.9L2210.7 1309L2213.3 1310.3L2216.6 1302.4L2219.3 1306.3L2222.3 1317.6L2222.5 1317.6L2225.2 1252.5L2228.8 1284.5L2231.5 1314.3L2234.4 1319.6L2237.4 1305.7L2240.4 1310.3L2243.4 1307L2246.4 1315.6L2249.3 1316.2L2252.2 1330.1L2255.3 1311L2258.3 1314.3L2261.6 1324.2L2264.5 1307L2267.4 1323.5L2270.5 1322.2L2273.5 1313.6L2276.4 1325.5L2279.7 1330.1L2283 1327.5L2285.7 1318.9L2288.6 1295.1L2291.6 1318.9L2294.7 1325.5L2297.6 1311L2300.5 1305L2303.3 1309L2306.2 1265.3L2308.8 1271.3L2312.1 1282.5L2315.1 1270.6L2318.1 1286.5L2321.1 1284.5L2324 1289.1L2327 1302.4L2330 1295.7L2333 1311.6L2336 1312.3L2338.9 1309.6L2341.9 1334.8L2345.2 1285.2L2347.9 1299L2350.9 1322.9L2354.1 1322.2L2357.1 1287.8L2360 1305.7L2363.1 1308.3L2366 1297.1L2369 1308.3L2372.1 1318.2L2375 1314.9L2378.3 1297.7L2381.2 1307.6L2384.2 1297.7L2387.3 1298.4L2390.2 1293.1L2393.1 1297.7L2396.1 1322.2L2399.2 1319.6L2402.1 1322.2L2405.1 1305.7L2408 1310.3L2411.1 1316.2L2414 1324.2L2417 1335.4L2419.9 1299L2423 1297.7L2425.9 1311L2428.8 1315.6L2431.9 1324.2L2434.9 1305.7L2437.8 1304.3L2440.8 1322.9L2443.8 1322.2L2446.8 1318.9L2450 1288.5L2453 1303L2456.1 1329.5L2459 1329.5L2461.9 1287.1L2464.9 1291.1L2468 1312.9L2470.9 1318.2L2473.9 1305L2477.1 1329.5L2480.1 1309L2482.8 1310.3L2486.1 1303.7L2489.1 1301.7L2489.4 1317.6" fill="none" stroke="#73c876" stroke-width="2" stroke-linejoin="round" stroke-linecap="round"/><g class="axl"><text x="1397.3" y="1081.38" font-size="22" fill="#7e7f86" text-anchor="end">100%</text><text x="1397.3" y="1154.88" font-size="22" fill="#7e7f86" text-anchor="end">80%</text><text x="1397.3" y="1228.38" font-size="22" fill="#7e7f86" text-anchor="end">60%</text><text x="1397.3" y="1301.88" font-size="22" fill="#7e7f86" text-anchor="end">40%</text><text x="1397.3" y="1375.38" font-size="22" fill="#7e7f86" text-anchor="end">20%</text><text x="1397.3" y="1448.88" font-size="22" fill="#7e7f86" text-anchor="end">0%</text><text x="1567.3" y="1476.86" font-size="22.5" fill="#7e7f86" text-anchor="middle">12:00</text><text x="1746.7" y="1476.86" font-size="22.5" fill="#7e7f86" text-anchor="middle">13:00</text><text x="1926.1" y="1476.86" font-size="22.5" fill="#7e7f86" text-anchor="middle">14:00</text><text x="2105.5" y="1476.86" font-size="22.5" fill="#7e7f86" text-anchor="middle">15:00</text><text x="2284.9" y="1476.86" font-size="22.5" fill="#7e7f86" text-anchor="middle">16:00</text><text x="2464.3" y="1476.86" font-size="22.5" fill="#7e7f86" text-anchor="middle">17:00</text></g></svg><ul class="lg" style="left:526.6px;top:537.6px;width:174.7px;height:50.1px;"><li><i class="dot" style="left:8.6px;top:9.25px;background:#73c876"></i><span class="t" style="left:58.2px;top:8.71px;font-size:23px;line-height:28px;color:#f6f6f6;letter-spacing:0.533px;-webkit-text-stroke:0.65px #f6f6f6;">I/O usage</span></li></ul></section><section class="panel" style="left:49.9px;top:1597.7px;width:1232px;height:608.8px;"></section><section class="panel" style="left:1298px;top:1597.7px;width:1232px;height:608.8px;"></section></main></body></html>
